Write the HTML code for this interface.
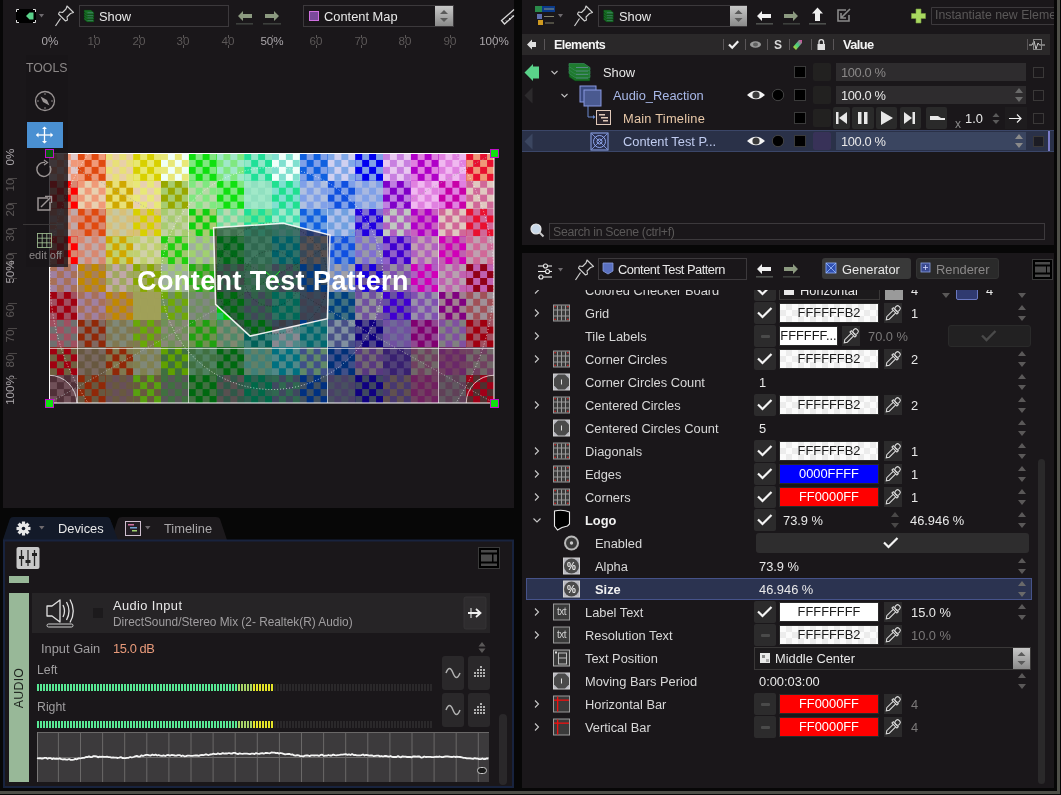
<!DOCTYPE html><html><head><meta charset="utf-8"><style>
html,body{margin:0;padding:0;width:1061px;height:795px;overflow:hidden;background:#070707}
div{position:absolute;box-sizing:border-box}
.t{white-space:nowrap;font-family:"Liberation Sans",sans-serif;will-change:transform}
svg{position:absolute;overflow:visible}
</style></head><body>
<div style="left:0px;top:0px;width:1061px;height:795px;background:#070707"></div>
<div style="left:3px;top:0px;width:511px;height:508px;background:#1a171a"></div>
<div style="left:522px;top:0px;width:532px;height:245px;background:#1a171a"></div>
<div style="left:522px;top:253px;width:532px;height:535px;background:#1a171a"></div>
<div style="left:0px;top:791px;width:1057px;height:3px;background:#4e4f48"></div>
<div style="left:1057px;top:0px;width:3px;height:794px;background:#4e4f48"></div>
<svg style="left:50px;top:153px" width="444" height="250" viewBox="0 0 64 36" preserveAspectRatio="none" shape-rendering="crispEdges"><defs><pattern id="ckp" width="2" height="2" patternUnits="userSpaceOnUse"><rect width="1" height="1" fill="#fff"/><rect x="1" y="1" width="1" height="1" fill="#fff"/></pattern><mask id="ckm" maskUnits="userSpaceOnUse" x="0" y="0" width="64" height="36"><rect width="64" height="36" fill="url(#ckp)"/></mask><clipPath id="logoclip"><polygon points="23.582,10.771 33.614,10.123 40.360,11.822 39.986,23.861 28.843,26.366 23.870,21.787"/></clipPath></defs><rect x="0" y="0" width="4" height="4" fill="#e0c8c8"/><rect x="4" y="0" width="4" height="4" fill="#f09a78"/><rect x="8" y="0" width="4" height="4" fill="#e8d0a8"/><rect x="12" y="0" width="4" height="4" fill="#e8e870"/><rect x="16" y="0" width="4" height="4" fill="#f0fff8"/><rect x="20" y="0" width="4" height="4" fill="#80e880"/><rect x="24" y="0" width="4" height="4" fill="#80e880"/><rect x="28" y="0" width="4" height="4" fill="#90e8c8"/><rect x="32" y="0" width="4" height="4" fill="#f0fffa"/><rect x="36" y="0" width="4" height="4" fill="#80a0e8"/><rect x="40" y="0" width="4" height="4" fill="#d0d0f0"/><rect x="44" y="0" width="4" height="4" fill="#80a0e8"/><rect x="48" y="0" width="4" height="4" fill="#e8c8f0"/><rect x="52" y="0" width="4" height="4" fill="#e080e0"/><rect x="56" y="0" width="4" height="4" fill="#f0b8f0"/><rect x="60" y="0" width="4" height="4" fill="#f09878"/><rect x="0" y="4" width="4" height="4" fill="#d88870"/><rect x="4" y="4" width="4" height="4" fill="#e8d0b0"/><rect x="8" y="4" width="4" height="4" fill="#e8e078"/><rect x="12" y="4" width="4" height="4" fill="#e8d0b0"/><rect x="16" y="4" width="4" height="4" fill="#a8cc70"/><rect x="20" y="4" width="4" height="4" fill="#b8d8a8"/><rect x="24" y="4" width="4" height="4" fill="#80e880"/><rect x="28" y="4" width="4" height="4" fill="#90e0c0"/><rect x="32" y="4" width="4" height="4" fill="#80e0d0"/><rect x="36" y="4" width="4" height="4" fill="#b0c0e0"/><rect x="40" y="4" width="4" height="4" fill="#80a0e8"/><rect x="44" y="4" width="4" height="4" fill="#80a0e8"/><rect x="48" y="4" width="4" height="4" fill="#c080e0"/><rect x="52" y="4" width="4" height="4" fill="#f0b8f0"/><rect x="56" y="4" width="4" height="4" fill="#e080e0"/><rect x="60" y="4" width="4" height="4" fill="#e0c8c0"/><rect x="0" y="8" width="4" height="4" fill="#c0a8a8"/><rect x="4" y="8" width="4" height="4" fill="#d88870"/><rect x="8" y="8" width="4" height="4" fill="#c8c8a0"/><rect x="12" y="8" width="4" height="4" fill="#d8c078"/><rect x="16" y="8" width="4" height="4" fill="#c0d0a0"/><rect x="20" y="8" width="4" height="4" fill="#a8cc70"/><rect x="24" y="8" width="4" height="4" fill="#b8d8b0"/><rect x="28" y="8" width="4" height="4" fill="#70e090"/><rect x="32" y="8" width="4" height="4" fill="#a0e8c8"/><rect x="36" y="8" width="4" height="4" fill="#70a0e0"/><rect x="40" y="8" width="4" height="4" fill="#b0c0e8"/><rect x="44" y="8" width="4" height="4" fill="#8070d0"/><rect x="48" y="8" width="4" height="4" fill="#c0c8c0"/><rect x="52" y="8" width="4" height="4" fill="#c860c0"/><rect x="56" y="8" width="4" height="4" fill="#e0c8c0"/><rect x="60" y="8" width="4" height="4" fill="#d06898"/><rect x="0" y="12" width="4" height="4" fill="#d88870"/><rect x="4" y="12" width="4" height="4" fill="#c0a8a8"/><rect x="8" y="12" width="4" height="4" fill="#c0d070"/><rect x="12" y="12" width="4" height="4" fill="#d0d0a8"/><rect x="16" y="12" width="4" height="4" fill="#a0c870"/><rect x="20" y="12" width="4" height="4" fill="#a0b0a0"/><rect x="24" y="12" width="4" height="4" fill="#2be069"/><rect x="28" y="12" width="4" height="4" fill="#51f3b5"/><rect x="32" y="12" width="4" height="4" fill="#2be0c8"/><rect x="36" y="12" width="4" height="4" fill="#8a948f"/><rect x="40" y="12" width="4" height="4" fill="#6890d8"/><rect x="44" y="12" width="4" height="4" fill="#9898a8"/><rect x="48" y="12" width="4" height="4" fill="#9060c8"/><rect x="52" y="12" width="4" height="4" fill="#c0a0b0"/><rect x="56" y="12" width="4" height="4" fill="#c060b0"/><rect x="60" y="12" width="4" height="4" fill="#c0a0b0"/><rect x="0" y="16" width="4" height="4" fill="#a080a0"/><rect x="4" y="16" width="4" height="4" fill="#a88058"/><rect x="8" y="16" width="4" height="4" fill="#c0a8a8"/><rect x="12" y="16" width="4" height="4" fill="#a0a860"/><rect x="16" y="16" width="4" height="4" fill="#a0c870"/><rect x="20" y="16" width="4" height="4" fill="#70a050"/><rect x="24" y="16" width="4" height="4" fill="#51817c"/><rect x="28" y="16" width="4" height="4" fill="#51cda2"/><rect x="32" y="16" width="4" height="4" fill="#2bba8f"/><rect x="36" y="16" width="4" height="4" fill="#3e81a2"/><rect x="40" y="16" width="4" height="4" fill="#a0a0a8"/><rect x="44" y="16" width="4" height="4" fill="#705898"/><rect x="48" y="16" width="4" height="4" fill="#9890a0"/><rect x="52" y="16" width="4" height="4" fill="#b060c0"/><rect x="56" y="16" width="4" height="4" fill="#b8a0b0"/><rect x="60" y="16" width="4" height="4" fill="#c060b0"/><rect x="0" y="20" width="4" height="4" fill="#a05060"/><rect x="4" y="20" width="4" height="4" fill="#a080a0"/><rect x="8" y="20" width="4" height="4" fill="#a88058"/><rect x="12" y="20" width="4" height="4" fill="#a0a058"/><rect x="16" y="20" width="4" height="4" fill="#709060"/><rect x="20" y="20" width="4" height="4" fill="#808880"/><rect x="24" y="20" width="4" height="4" fill="#2bba69"/><rect x="28" y="20" width="4" height="4" fill="#2bba7c"/><rect x="32" y="20" width="4" height="4" fill="#2be0b5"/><rect x="36" y="20" width="4" height="4" fill="#516e8f"/><rect x="40" y="20" width="4" height="4" fill="#407080"/><rect x="44" y="20" width="4" height="4" fill="#909098"/><rect x="48" y="20" width="4" height="4" fill="#6850a0"/><rect x="52" y="20" width="4" height="4" fill="#9890a8"/><rect x="56" y="20" width="4" height="4" fill="#a08090"/><rect x="60" y="20" width="4" height="4" fill="#a09098"/><rect x="0" y="24" width="4" height="4" fill="#707070"/><rect x="4" y="24" width="4" height="4" fill="#806860"/><rect x="8" y="24" width="4" height="4" fill="#808878"/><rect x="12" y="24" width="4" height="4" fill="#807850"/><rect x="16" y="24" width="4" height="4" fill="#888878"/><rect x="20" y="24" width="4" height="4" fill="#709050"/><rect x="24" y="24" width="4" height="4" fill="#808870"/><rect x="28" y="24" width="4" height="4" fill="#408078"/><rect x="32" y="24" width="4" height="4" fill="#888890"/><rect x="36" y="24" width="4" height="4" fill="#408080"/><rect x="40" y="24" width="4" height="4" fill="#8090a0"/><rect x="44" y="24" width="4" height="4" fill="#504888"/><rect x="48" y="24" width="4" height="4" fill="#706898"/><rect x="52" y="24" width="4" height="4" fill="#904890"/><rect x="56" y="24" width="4" height="4" fill="#808080"/><rect x="60" y="24" width="4" height="4" fill="#a05060"/><rect x="0" y="28" width="4" height="4" fill="#706040"/><rect x="4" y="28" width="4" height="4" fill="#786860"/><rect x="8" y="28" width="4" height="4" fill="#807850"/><rect x="12" y="28" width="4" height="4" fill="#808878"/><rect x="16" y="28" width="4" height="4" fill="#407040"/><rect x="20" y="28" width="4" height="4" fill="#508060"/><rect x="24" y="28" width="4" height="4" fill="#407048"/><rect x="28" y="28" width="4" height="4" fill="#608068"/><rect x="32" y="28" width="4" height="4" fill="#508888"/><rect x="36" y="28" width="4" height="4" fill="#608868"/><rect x="40" y="28" width="4" height="4" fill="#405088"/><rect x="44" y="28" width="4" height="4" fill="#706870"/><rect x="48" y="28" width="4" height="4" fill="#504078"/><rect x="52" y="28" width="4" height="4" fill="#706868"/><rect x="56" y="28" width="4" height="4" fill="#704060"/><rect x="60" y="28" width="4" height="4" fill="#706868"/><rect x="0" y="32" width="4" height="4" fill="#705058"/><rect x="4" y="32" width="4" height="4" fill="#685840"/><rect x="8" y="32" width="4" height="4" fill="#685058"/><rect x="12" y="32" width="4" height="4" fill="#685840"/><rect x="16" y="32" width="4" height="4" fill="#585858"/><rect x="20" y="32" width="4" height="4" fill="#407040"/><rect x="24" y="32" width="4" height="4" fill="#585050"/><rect x="28" y="32" width="4" height="4" fill="#306050"/><rect x="32" y="32" width="4" height="4" fill="#404860"/><rect x="36" y="32" width="4" height="4" fill="#405060"/><rect x="40" y="32" width="4" height="4" fill="#485060"/><rect x="44" y="32" width="4" height="4" fill="#404860"/><rect x="48" y="32" width="4" height="4" fill="#605050"/><rect x="52" y="32" width="4" height="4" fill="#704060"/><rect x="56" y="32" width="4" height="4" fill="#605860"/><rect x="60" y="32" width="4" height="4" fill="#503030"/><g mask="url(#ckm)"><rect x="0" y="0" width="4" height="4" fill="#f09878"/><rect x="4" y="0" width="4" height="4" fill="#e04a10"/><rect x="8" y="0" width="4" height="4" fill="#e8e078"/><rect x="12" y="0" width="4" height="4" fill="#d8d000"/><rect x="16" y="0" width="4" height="4" fill="#e8e878"/><rect x="20" y="0" width="4" height="4" fill="#10e010"/><rect x="24" y="0" width="4" height="4" fill="#a0e8c8"/><rect x="28" y="0" width="4" height="4" fill="#20e098"/><rect x="32" y="0" width="4" height="4" fill="#80e0d0"/><rect x="36" y="0" width="4" height="4" fill="#1060e0"/><rect x="40" y="0" width="4" height="4" fill="#80a8e8"/><rect x="44" y="0" width="4" height="4" fill="#0000f0"/><rect x="48" y="0" width="4" height="4" fill="#c880e0"/><rect x="52" y="0" width="4" height="4" fill="#b000c8"/><rect x="56" y="0" width="4" height="4" fill="#e080e0"/><rect x="60" y="0" width="4" height="4" fill="#e81030"/><rect x="0" y="4" width="4" height="4" fill="#ff0000"/><rect x="4" y="4" width="4" height="4" fill="#f09a78"/><rect x="8" y="4" width="4" height="4" fill="#d0a800"/><rect x="12" y="4" width="4" height="4" fill="#e8e878"/><rect x="16" y="4" width="4" height="4" fill="#98a800"/><rect x="20" y="4" width="4" height="4" fill="#80e880"/><rect x="24" y="4" width="4" height="4" fill="#10e010"/><rect x="28" y="4" width="4" height="4" fill="#a0e8c8"/><rect x="32" y="4" width="4" height="4" fill="#20e090"/><rect x="36" y="4" width="4" height="4" fill="#80a0e8"/><rect x="40" y="4" width="4" height="4" fill="#1050e0"/><rect x="44" y="4" width="4" height="4" fill="#a8b8e0"/><rect x="48" y="4" width="4" height="4" fill="#8000c8"/><rect x="52" y="4" width="4" height="4" fill="#e080e0"/><rect x="56" y="4" width="4" height="4" fill="#c800a8"/><rect x="60" y="4" width="4" height="4" fill="#d06898"/><rect x="0" y="8" width="4" height="4" fill="#d88870"/><rect x="4" y="8" width="4" height="4" fill="#e04a10"/><rect x="8" y="8" width="4" height="4" fill="#d8c078"/><rect x="12" y="8" width="4" height="4" fill="#d8d000"/><rect x="16" y="8" width="4" height="4" fill="#a8cc70"/><rect x="20" y="8" width="4" height="4" fill="#10d010"/><rect x="24" y="8" width="4" height="4" fill="#70e0a0"/><rect x="28" y="8" width="4" height="4" fill="#20e098"/><rect x="32" y="8" width="4" height="4" fill="#40e0b0"/><rect x="36" y="8" width="4" height="4" fill="#1060e0"/><rect x="40" y="8" width="4" height="4" fill="#70a0e0"/><rect x="44" y="8" width="4" height="4" fill="#2000e0"/><rect x="48" y="8" width="4" height="4" fill="#b060c0"/><rect x="52" y="8" width="4" height="4" fill="#b000c8"/><rect x="56" y="8" width="4" height="4" fill="#d06898"/><rect x="60" y="8" width="4" height="4" fill="#e81030"/><rect x="0" y="12" width="4" height="4" fill="#ff0000"/><rect x="4" y="12" width="4" height="4" fill="#d88870"/><rect x="8" y="12" width="4" height="4" fill="#d0a800"/><rect x="12" y="12" width="4" height="4" fill="#c0d070"/><rect x="16" y="12" width="4" height="4" fill="#20d010"/><rect x="20" y="12" width="4" height="4" fill="#a0d070"/><rect x="24" y="12" width="4" height="4" fill="#00cd0a"/><rect x="28" y="12" width="4" height="4" fill="#2bcd8f"/><rect x="32" y="12" width="4" height="4" fill="#00bac8"/><rect x="36" y="12" width="4" height="4" fill="#3e81a2"/><rect x="40" y="12" width="4" height="4" fill="#1050e0"/><rect x="44" y="12" width="4" height="4" fill="#8070d0"/><rect x="48" y="12" width="4" height="4" fill="#4000d0"/><rect x="52" y="12" width="4" height="4" fill="#b060c0"/><rect x="56" y="12" width="4" height="4" fill="#d000b8"/><rect x="60" y="12" width="4" height="4" fill="#d06898"/><rect x="0" y="16" width="4" height="4" fill="#a87058"/><rect x="4" y="16" width="4" height="4" fill="#c08800"/><rect x="8" y="16" width="4" height="4" fill="#a0a860"/><rect x="12" y="16" width="4" height="4" fill="#88a800"/><rect x="16" y="16" width="4" height="4" fill="#a0b0a0"/><rect x="20" y="16" width="4" height="4" fill="#20b010"/><rect x="24" y="16" width="4" height="4" fill="#2bba7c"/><rect x="28" y="16" width="4" height="4" fill="#2bcd7c"/><rect x="32" y="16" width="4" height="4" fill="#5181a2"/><rect x="36" y="16" width="4" height="4" fill="#005aff"/><rect x="40" y="16" width="4" height="4" fill="#6888d0"/><rect x="44" y="16" width="4" height="4" fill="#1800e0"/><rect x="48" y="16" width="4" height="4" fill="#8050b0"/><rect x="52" y="16" width="4" height="4" fill="#d000b8"/><rect x="56" y="16" width="4" height="4" fill="#c060b0"/><rect x="60" y="16" width="4" height="4" fill="#900018"/><rect x="0" y="20" width="4" height="4" fill="#a00010"/><rect x="4" y="20" width="4" height="4" fill="#a87058"/><rect x="8" y="20" width="4" height="4" fill="#c08800"/><rect x="12" y="20" width="4" height="4" fill="#a0a058"/><rect x="16" y="20" width="4" height="4" fill="#70a808"/><rect x="20" y="20" width="4" height="4" fill="#709060"/><rect x="24" y="20" width="4" height="4" fill="#00cd00"/><rect x="28" y="20" width="4" height="4" fill="#5181a2"/><rect x="32" y="20" width="4" height="4" fill="#00cda2"/><rect x="36" y="20" width="4" height="4" fill="#3e81a2"/><rect x="40" y="20" width="4" height="4" fill="#004080"/><rect x="44" y="20" width="4" height="4" fill="#7050a0"/><rect x="48" y="20" width="4" height="4" fill="#4000d0"/><rect x="52" y="20" width="4" height="4" fill="#8050b0"/><rect x="56" y="20" width="4" height="4" fill="#800080"/><rect x="60" y="20" width="4" height="4" fill="#a05058"/><rect x="0" y="24" width="4" height="4" fill="#a05060"/><rect x="4" y="24" width="4" height="4" fill="#902808"/><rect x="8" y="24" width="4" height="4" fill="#807850"/><rect x="12" y="24" width="4" height="4" fill="#68a808"/><rect x="16" y="24" width="4" height="4" fill="#709058"/><rect x="20" y="24" width="4" height="4" fill="#20a010"/><rect x="24" y="24" width="4" height="4" fill="#508868"/><rect x="28" y="24" width="4" height="4" fill="#006058"/><rect x="32" y="24" width="4" height="4" fill="#508888"/><rect x="36" y="24" width="4" height="4" fill="#006870"/><rect x="40" y="24" width="4" height="4" fill="#485088"/><rect x="44" y="24" width="4" height="4" fill="#100080"/><rect x="48" y="24" width="4" height="4" fill="#7050a0"/><rect x="52" y="24" width="4" height="4" fill="#800070"/><rect x="56" y="24" width="4" height="4" fill="#8050a0"/><rect x="60" y="24" width="4" height="4" fill="#a00010"/><rect x="0" y="28" width="4" height="4" fill="#a00010"/><rect x="4" y="28" width="4" height="4" fill="#685840"/><rect x="8" y="28" width="4" height="4" fill="#902808"/><rect x="12" y="28" width="4" height="4" fill="#808050"/><rect x="16" y="28" width="4" height="4" fill="#60a000"/><rect x="20" y="28" width="4" height="4" fill="#407040"/><rect x="24" y="28" width="4" height="4" fill="#006810"/><rect x="28" y="28" width="4" height="4" fill="#408078"/><rect x="32" y="28" width="4" height="4" fill="#007080"/><rect x="36" y="28" width="4" height="4" fill="#405088"/><rect x="40" y="28" width="4" height="4" fill="#003078"/><rect x="44" y="28" width="4" height="4" fill="#583880"/><rect x="48" y="28" width="4" height="4" fill="#382070"/><rect x="52" y="28" width="4" height="4" fill="#704060"/><rect x="56" y="28" width="4" height="4" fill="#6a2868"/><rect x="60" y="28" width="4" height="4" fill="#704060"/><rect x="0" y="32" width="4" height="4" fill="#503038"/><rect x="4" y="32" width="4" height="4" fill="#902808"/><rect x="8" y="32" width="4" height="4" fill="#685840"/><rect x="12" y="32" width="4" height="4" fill="#58a010"/><rect x="16" y="32" width="4" height="4" fill="#407040"/><rect x="20" y="32" width="4" height="4" fill="#006810"/><rect x="24" y="32" width="4" height="4" fill="#305848"/><rect x="28" y="32" width="4" height="4" fill="#006848"/><rect x="32" y="32" width="4" height="4" fill="#306850"/><rect x="36" y="32" width="4" height="4" fill="#003080"/><rect x="40" y="32" width="4" height="4" fill="#4a4068"/><rect x="44" y="32" width="4" height="4" fill="#100080"/><rect x="48" y="32" width="4" height="4" fill="#483870"/><rect x="52" y="32" width="4" height="4" fill="#702060"/><rect x="56" y="32" width="4" height="4" fill="#604058"/><rect x="60" y="32" width="4" height="4" fill="#a00018"/></g><g clip-path="url(#logoclip)"><rect x="20" y="8" width="4" height="4" fill="#656843"/><rect x="24" y="8" width="4" height="4" fill="#407050"/><rect x="28" y="8" width="4" height="4" fill="#307860"/><rect x="32" y="8" width="4" height="4" fill="#307060"/><rect x="36" y="8" width="4" height="4" fill="#404870"/><rect x="40" y="8" width="4" height="4" fill="#686375"/><rect x="20" y="12" width="4" height="4" fill="#615c57"/><rect x="24" y="12" width="4" height="4" fill="#307040"/><rect x="28" y="12" width="4" height="4" fill="#407860"/><rect x="32" y="12" width="4" height="4" fill="#307068"/><rect x="36" y="12" width="4" height="4" fill="#585050"/><rect x="40" y="12" width="4" height="4" fill="#4a4e6f"/><rect x="20" y="16" width="4" height="4" fill="#4d5536"/><rect x="24" y="16" width="4" height="4" fill="#404848"/><rect x="28" y="16" width="4" height="4" fill="#406858"/><rect x="32" y="16" width="4" height="4" fill="#306050"/><rect x="36" y="16" width="4" height="4" fill="#384858"/><rect x="40" y="16" width="4" height="4" fill="#61555b"/><rect x="20" y="20" width="4" height="4" fill="#544b4a"/><rect x="24" y="20" width="4" height="4" fill="#306040"/><rect x="28" y="20" width="4" height="4" fill="#306048"/><rect x="32" y="20" width="4" height="4" fill="#307060"/><rect x="36" y="20" width="4" height="4" fill="#404050"/><rect x="40" y="20" width="4" height="4" fill="#39414a"/><rect x="20" y="24" width="4" height="4" fill="#4d4e36"/><rect x="24" y="24" width="4" height="4" fill="#305840"/><rect x="28" y="24" width="4" height="4" fill="#306048"/><rect x="32" y="24" width="4" height="4" fill="#3c3c44"/><rect x="36" y="24" width="4" height="4" fill="#384858"/><rect x="40" y="24" width="4" height="4" fill="#544e57"/><g mask="url(#ckm)"><rect x="20" y="8" width="4" height="4" fill="#25691b"/><rect x="24" y="8" width="4" height="4" fill="#508060"/><rect x="28" y="8" width="4" height="4" fill="#306850"/><rect x="32" y="8" width="4" height="4" fill="#407068"/><rect x="36" y="8" width="4" height="4" fill="#203870"/><rect x="40" y="8" width="4" height="4" fill="#4d5572"/><rect x="20" y="12" width="4" height="4" fill="#616943"/><rect x="24" y="12" width="4" height="4" fill="#006818"/><rect x="28" y="12" width="4" height="4" fill="#306850"/><rect x="32" y="12" width="4" height="4" fill="#006068"/><rect x="36" y="12" width="4" height="4" fill="#384858"/><rect x="40" y="12" width="4" height="4" fill="#253472"/><rect x="20" y="16" width="4" height="4" fill="#2b5c1b"/><rect x="24" y="16" width="4" height="4" fill="#306048"/><rect x="28" y="16" width="4" height="4" fill="#306848"/><rect x="32" y="16" width="4" height="4" fill="#404858"/><rect x="36" y="16" width="4" height="4" fill="#003880"/><rect x="40" y="16" width="4" height="4" fill="#4a4b6b"/><rect x="20" y="20" width="4" height="4" fill="#4d4e3c"/><rect x="24" y="20" width="4" height="4" fill="#006810"/><rect x="28" y="20" width="4" height="4" fill="#404858"/><rect x="32" y="20" width="4" height="4" fill="#006858"/><rect x="36" y="20" width="4" height="4" fill="#384858"/><rect x="40" y="20" width="4" height="4" fill="#1e2d4a"/><rect x="20" y="24" width="4" height="4" fill="#2b551b"/><rect x="24" y="24" width="4" height="4" fill="#3a3a3a"/><rect x="28" y="24" width="4" height="4" fill="#006810"/><rect x="32" y="24" width="4" height="4" fill="#384858"/><rect x="36" y="24" width="4" height="4" fill="#003888"/><rect x="40" y="24" width="4" height="4" fill="#3c344d"/></g></g></svg>
<svg style="left:0;top:0" width="1061" height="795"><line x1="77.5" y1="265" x2="77.5" y2="403" stroke="#fff" stroke-opacity="0.62" stroke-width="1"/><line x1="188.5" y1="181" x2="188.5" y2="403" stroke="#fff" stroke-opacity="0.62" stroke-width="1"/><line x1="327.5" y1="209" x2="327.5" y2="403" stroke="#fff" stroke-opacity="0.62" stroke-width="1"/><line x1="438.5" y1="209" x2="438.5" y2="403" stroke="#fff" stroke-opacity="0.62" stroke-width="1"/><line x1="50" y1="348.5" x2="494" y2="348.5" stroke="#fff" stroke-opacity="0.62" stroke-width="1"/><clipPath id="patclip"><rect x="50" y="154" width="444" height="249"/></clipPath><g clip-path="url(#patclip)"><mask id="nologo" maskUnits="userSpaceOnUse" x="0" y="0" width="1061" height="795"><rect width="1061" height="795" fill="#fff"/><polygon points="213.6,227.8 283.2,223.3 330,235.1 327.4,318.7 250.1,336.1 215.6,304.3" fill="#000"/></mask><g mask="url(#nologo)"><line x1="49" y1="153" x2="494" y2="403" stroke="#fff" stroke-opacity="0.75" stroke-dasharray="1 2"/><line x1="494" y1="153" x2="49" y2="403" stroke="#fff" stroke-opacity="0.75" stroke-dasharray="1 2"/></g><line x1="49" y1="153" x2="494" y2="403" stroke="#000" stroke-opacity="0.3" stroke-dasharray="1 2"/><line x1="494" y1="153" x2="49" y2="403" stroke="#000" stroke-opacity="0.3" stroke-dasharray="1 2"/><circle cx="272" cy="278.5" r="27.75" fill="none" stroke="#000" stroke-opacity="0.35" stroke-dasharray="1 2"/><circle cx="272" cy="278.5" r="55.5" fill="none" stroke="#000" stroke-opacity="0.35" stroke-dasharray="1 2"/><circle cx="272" cy="278.5" r="111" fill="none" stroke="#fff" stroke-opacity="0.7" stroke-dasharray="1 2"/><circle cx="272" cy="278.5" r="222" fill="none" stroke="#fff" stroke-opacity="0.7" stroke-dasharray="1 2"/><circle cx="49" cy="403" r="27.75" fill="none" stroke="#fff" stroke-opacity="0.7"/><circle cx="494" cy="403" r="27.75" fill="none" stroke="#fff" stroke-opacity="0.7"/></g><polygon points="213.6,227.8 283.2,223.3 330,235.1 327.4,318.7 250.1,336.1 215.6,304.3" fill="none" stroke="#fff" stroke-opacity="0.9" stroke-width="1.5"/><rect x="49.5" y="153.5" width="444.5" height="249.5" fill="none" stroke="#fff" stroke-width="1"/><line x1="266" y1="272" x2="280" y2="285" stroke="#20e020" stroke-width="1"/><line x1="280" y1="271" x2="266" y2="285" stroke="#20e020" stroke-width="1"/></svg>
<div class="t" style="left:137px;top:266px;font-size:27px;line-height:30px;color:#fff;font-weight:700;letter-spacing:0.42px">Content Test Pattern</div>
<div style="left:26px;top:55px;width:42px;height:212px;background:rgba(24,21,24,0.82)"></div>
<div class="t" style="left:26px;top:60px;font-size:12.3px;line-height:16px;color:#8c8888;font-weight:400;">TOOLS</div>
<div style="left:27px;top:122px;width:36px;height:26px;background:#4a90d2"></div>
<div style="left:23px;top:224px;width:40px;height:1px;background:#3a3738"></div>
<div class="t" style="left:29px;top:247px;font-size:11px;line-height:16px;color:#8c8888;font-weight:400;">edit off</div>
<svg style="left:0;top:0" width="100" height="300">
<circle cx="45" cy="101" r="9.5" fill="none" stroke="#9a9494" stroke-width="1.3"/>
<path d="M40.5 96.5 L47 100 L49.5 105.5 L43 102 Z" fill="#9a9494"/>
<g fill="#9a9494"><circle cx="45" cy="94" r="0.8"/><circle cx="45" cy="108" r="0.8"/><circle cx="38" cy="101" r="0.8"/><circle cx="52" cy="101" r="0.8"/></g>
<g stroke="#fff" stroke-width="1.3" fill="#fff">
<line x1="36.5" y1="135" x2="52.5" y2="135"/><line x1="44.5" y1="127" x2="44.5" y2="143"/>
<path d="M36 135 l2.5-2.5 v5 z M53 135 l-2.5-2.5 v5 z M44.5 126.5 l-2.5 2.5 h5 z M44.5 143.5 l-2.5-2.5 h5 z" stroke="none"/></g>
<path d="M50 166 A7 7 0 1 1 45 162.5" fill="none" stroke="#9a9494" stroke-width="1.4"/>
<path d="M44 160 l3.5 2.5 -3.5 2.5" fill="none" stroke="#9a9494" stroke-width="1.3"/>
<path d="M48 198 h-10 v12 h12 v-8" fill="none" stroke="#9a9494" stroke-width="1.5"/>
<line x1="41" y1="207" x2="50.5" y2="197.5" stroke="#9a9494" stroke-width="1.4"/>
<path d="M45 196.5 h6.5 v6.5" fill="none" stroke="#9a9494" stroke-width="1.4"/>
<g stroke="#a8c89a" stroke-width="0.8" fill="none"><rect x="37.5" y="233.5" width="14" height="14"/><line x1="42.2" y1="233.5" x2="42.2" y2="247.5"/><line x1="46.8" y1="233.5" x2="46.8" y2="247.5"/><line x1="37.5" y1="238.2" x2="51.5" y2="238.2"/><line x1="37.5" y1="242.8" x2="51.5" y2="242.8"/></g>
</svg>
<svg style="left:0;top:0" width="520" height="60">
<rect x="16" y="9" width="20" height="14" fill="#000"/>
<path d="M16.5 12 v-2.5 h2.5 M33 9.5 h2.5 v2.5 M35.5 20 v2.5 h-2.5 M19 22.5 h-2.5 v-2.5" stroke="#ddd" stroke-width="1" fill="none"/>
<path d="M26 16 l3.5-3.5 h4 v7 h-4 z" fill="#5ad28a"/>
<path d="M39 14 h5 l-2.5 3.5 z" fill="#6e6a6e"/>
<path d="M69 8 l4.5 4.5 -3 1 -3.5 3.5 0.5 3 -2 1 -7-7 1-2 3 0.5 3.5-3.5 1-3z" fill="none" stroke="#d0d0d0" stroke-width="1.1" stroke-linejoin="round"/>
<line x1="60.5" y1="18.5" x2="55.5" y2="26" stroke="#d0d0d0" stroke-width="1.2"/>
<rect x="79.5" y="5.5" width="149" height="21" fill="none" stroke="#3c393c"/>
<g><path d="M84 19.5 l3 2.5 h7 v-2 l-3-2.5 h-7z" fill="#177024" stroke="#0c3012" stroke-width="0.5"/><line x1="87.5" y1="20.2" x2="93" y2="20.2" stroke="#5a8a90" stroke-width="0.6"/><path d="M84 17.0 l3 2.5 h7 v-2 l-3-2.5 h-7z" fill="#177024" stroke="#0c3012" stroke-width="0.5"/><line x1="87.5" y1="17.7" x2="93" y2="17.7" stroke="#5a8a90" stroke-width="0.6"/><path d="M84 14.5 l3 2.5 h7 v-2 l-3-2.5 h-7z" fill="#177024" stroke="#0c3012" stroke-width="0.5"/><line x1="87.5" y1="15.2" x2="93" y2="15.2" stroke="#5a8a90" stroke-width="0.6"/><path d="M84 12.0 l3 2.5 h7 v-2 l-3-2.5 h-7z" fill="#177024" stroke="#0c3012" stroke-width="0.5"/><line x1="87.5" y1="12.7" x2="93" y2="12.7" stroke="#5a8a90" stroke-width="0.6"/></g>
<path d="M238 16 l5-5 v3 h9 v4 h-9 v3 z" fill="#8c9a80"/><rect x="236" y="23" width="17" height="1.6" fill="#3c3f3c"/>
<path d="M279 16 l-5-5 v3 h-9 v4 h9 v3 z" fill="#8c9a80"/><rect x="263" y="23" width="18" height="1.6" fill="#3c3f3c"/>
<rect x="303.5" y="5.5" width="150" height="21" fill="none" stroke="#3c393c"/>
<rect x="309.5" y="11.5" width="9" height="9" fill="#7a4a9a" stroke="#d070e0" stroke-width="1"/>
<path d="M514 9.5 L501.5 20.5 L504.5 24 L514 15.5" fill="none" stroke="#d8d8d8" stroke-width="1.3"/>
<path d="M506 20.5 l1.5 1.5 M509 18 l1.5 1.5 M512 15.5 l1.5 1.5" stroke="#d8d8d8" stroke-width="1"/>
</svg>
<div style="left:435px;top:6px;width:18px;height:20px;background:linear-gradient(#c8c8c8,#8a8a8a)"></div>
<svg style="left:435px;top:6px" width="18" height="20"><path d="M9 4 l4 4 h-8z M9 16 l4-4 h-8z" fill="#5a5a5a"/></svg>
<div class="t" style="left:99px;top:9px;font-size:12.85px;line-height:16px;color:#e8e8e8;font-weight:400;">Show</div>
<div class="t" style="left:324px;top:9px;font-size:12.85px;line-height:16px;color:#e8e8e8;font-weight:400;">Content Map</div>
<div class="t" style="left:10.0px;top:33px;width:80px;text-align:center;font-size:11.6px;line-height:16px;color:#aaa6aa">0%</div>
<div style="left:50px;top:35px;width:1px;height:2px;background:#5c5858"></div>
<div style="left:50px;top:45px;width:1px;height:3px;background:#5c5858"></div>
<div class="t" style="left:54.4px;top:33px;width:80px;text-align:center;font-size:11.6px;line-height:16px;color:#5c5858">10</div>
<div style="left:94px;top:35px;width:1px;height:3px;background:#5c5858"></div>
<div style="left:94px;top:45px;width:1px;height:3px;background:#5c5858"></div>
<div class="t" style="left:98.8px;top:33px;width:80px;text-align:center;font-size:11.6px;line-height:16px;color:#5c5858">20</div>
<div style="left:139px;top:35px;width:1px;height:3px;background:#5c5858"></div>
<div style="left:139px;top:45px;width:1px;height:3px;background:#5c5858"></div>
<div class="t" style="left:143.2px;top:33px;width:80px;text-align:center;font-size:11.6px;line-height:16px;color:#5c5858">30</div>
<div style="left:183px;top:35px;width:1px;height:3px;background:#5c5858"></div>
<div style="left:183px;top:45px;width:1px;height:3px;background:#5c5858"></div>
<div class="t" style="left:187.6px;top:33px;width:80px;text-align:center;font-size:11.6px;line-height:16px;color:#5c5858">40</div>
<div style="left:228px;top:35px;width:1px;height:3px;background:#5c5858"></div>
<div style="left:228px;top:45px;width:1px;height:3px;background:#5c5858"></div>
<div class="t" style="left:232.0px;top:33px;width:80px;text-align:center;font-size:11.6px;line-height:16px;color:#aaa6aa">50%</div>
<div style="left:272px;top:35px;width:1px;height:2px;background:#5c5858"></div>
<div style="left:272px;top:45px;width:1px;height:3px;background:#5c5858"></div>
<div class="t" style="left:276.4px;top:33px;width:80px;text-align:center;font-size:11.6px;line-height:16px;color:#5c5858">60</div>
<div style="left:316px;top:35px;width:1px;height:3px;background:#5c5858"></div>
<div style="left:316px;top:45px;width:1px;height:3px;background:#5c5858"></div>
<div class="t" style="left:320.8px;top:33px;width:80px;text-align:center;font-size:11.6px;line-height:16px;color:#5c5858">70</div>
<div style="left:361px;top:35px;width:1px;height:3px;background:#5c5858"></div>
<div style="left:361px;top:45px;width:1px;height:3px;background:#5c5858"></div>
<div class="t" style="left:365.2px;top:33px;width:80px;text-align:center;font-size:11.6px;line-height:16px;color:#5c5858">80</div>
<div style="left:405px;top:35px;width:1px;height:3px;background:#5c5858"></div>
<div style="left:405px;top:45px;width:1px;height:3px;background:#5c5858"></div>
<div class="t" style="left:409.6px;top:33px;width:80px;text-align:center;font-size:11.6px;line-height:16px;color:#5c5858">90</div>
<div style="left:450px;top:35px;width:1px;height:3px;background:#5c5858"></div>
<div style="left:450px;top:45px;width:1px;height:3px;background:#5c5858"></div>
<div class="t" style="left:454.0px;top:33px;width:80px;text-align:center;font-size:11.6px;line-height:16px;color:#aaa6aa">100%</div>
<div style="left:494px;top:35px;width:1px;height:2px;background:#5c5858"></div>
<div style="left:494px;top:45px;width:1px;height:3px;background:#5c5858"></div>
<div class="t" style="left:-30px;top:149px;width:80px;height:16px;text-align:center;font-size:11.6px;line-height:16px;color:#aaa6aa;transform:rotate(-90deg)">0%</div>
<div class="t" style="left:-30px;top:177px;width:80px;height:16px;text-align:center;font-size:11.6px;line-height:16px;color:#5c5858;transform:rotate(-90deg)">10</div>
<div class="t" style="left:-30px;top:202px;width:80px;height:16px;text-align:center;font-size:11.6px;line-height:16px;color:#5c5858;transform:rotate(-90deg)">20</div>
<div class="t" style="left:-30px;top:227px;width:80px;height:16px;text-align:center;font-size:11.6px;line-height:16px;color:#5c5858;transform:rotate(-90deg)">30</div>
<div class="t" style="left:-30px;top:252px;width:80px;height:16px;text-align:center;font-size:11.6px;line-height:16px;color:#5c5858;transform:rotate(-90deg)">40</div>
<div class="t" style="left:-30px;top:264px;width:80px;height:16px;text-align:center;font-size:11.6px;line-height:16px;color:#aaa6aa;transform:rotate(-90deg)">50%</div>
<div class="t" style="left:-30px;top:303px;width:80px;height:16px;text-align:center;font-size:11.6px;line-height:16px;color:#5c5858;transform:rotate(-90deg)">60</div>
<div class="t" style="left:-30px;top:328px;width:80px;height:16px;text-align:center;font-size:11.6px;line-height:16px;color:#5c5858;transform:rotate(-90deg)">70</div>
<div class="t" style="left:-30px;top:353px;width:80px;height:16px;text-align:center;font-size:11.6px;line-height:16px;color:#5c5858;transform:rotate(-90deg)">80</div>
<div class="t" style="left:-30px;top:382px;width:80px;height:16px;text-align:center;font-size:11.6px;line-height:16px;color:#aaa6aa;transform:rotate(-90deg)">100%</div>
<div style="left:8px;top:178px;width:9px;height:1px;background:#4a4646"></div>
<div style="left:8px;top:203px;width:9px;height:1px;background:#4a4646"></div>
<div style="left:8px;top:228px;width:9px;height:1px;background:#4a4646"></div>
<div style="left:8px;top:253px;width:9px;height:1px;background:#4a4646"></div>
<div style="left:8px;top:278px;width:9px;height:1px;background:#4a4646"></div>
<div style="left:8px;top:303px;width:9px;height:1px;background:#4a4646"></div>
<div style="left:8px;top:328px;width:9px;height:1px;background:#4a4646"></div>
<div style="left:8px;top:353px;width:9px;height:1px;background:#4a4646"></div>
<div style="left:8px;top:378px;width:9px;height:1px;background:#4a4646"></div>
<div style="left:45px;top:149px;width:9px;height:9px;background:#0a5a10;border:1px solid #c010c8"></div>
<div style="left:490px;top:149px;width:9px;height:9px;background:#10e010;border:1px solid #c010c8"></div>
<div style="left:45px;top:399px;width:9px;height:9px;background:#10e010;border:1px solid #c010c8"></div>
<div style="left:490px;top:399px;width:9px;height:9px;background:#10e010;border:1px solid #c010c8"></div>
<svg style="left:0;top:0" width="1061" height="300">
<rect x="535" y="6" width="7" height="6" fill="#2a8a4a"/><rect x="542" y="6" width="13" height="6" fill="#0a3a8a"/><line x1="544" y1="9" x2="554" y2="9" stroke="#b0b080" stroke-width="0.8"/>
<rect x="537" y="14" width="5" height="5" fill="#6070b0"/><line x1="544" y1="16.5" x2="554" y2="16.5" stroke="#a0a080" stroke-width="0.8"/>
<rect x="538" y="20" width="5" height="5" fill="#d09a20"/><line x1="545" y1="23" x2="554" y2="23" stroke="#a0a080" stroke-width="0.8"/>
<path d="M558 14 h5 l-2.5 3.5 z" fill="#6e6a6e"/>
<path d="M588 8 l4.5 4.5 -3 1 -3.5 3.5 0.5 3 -2 1 -7-7 1-2 3 0.5 3.5-3.5 1-3z" fill="none" stroke="#d0d0d0" stroke-width="1.1" stroke-linejoin="round"/>
<line x1="579.5" y1="18.5" x2="574.5" y2="26" stroke="#d0d0d0" stroke-width="1.2"/>
<rect x="598.5" y="5.5" width="148" height="21" fill="none" stroke="#3c393c"/>
<g><path d="M603.5 19.5 l3 2.5 h7 v-2 l-3-2.5 h-7z" fill="#177024" stroke="#0c3012" stroke-width="0.5"/><line x1="607.0" y1="20.2" x2="612.5" y2="20.2" stroke="#5a8a90" stroke-width="0.6"/><path d="M603.5 17.0 l3 2.5 h7 v-2 l-3-2.5 h-7z" fill="#177024" stroke="#0c3012" stroke-width="0.5"/><line x1="607.0" y1="17.7" x2="612.5" y2="17.7" stroke="#5a8a90" stroke-width="0.6"/><path d="M603.5 14.5 l3 2.5 h7 v-2 l-3-2.5 h-7z" fill="#177024" stroke="#0c3012" stroke-width="0.5"/><line x1="607.0" y1="15.2" x2="612.5" y2="15.2" stroke="#5a8a90" stroke-width="0.6"/><path d="M603.5 12.0 l3 2.5 h7 v-2 l-3-2.5 h-7z" fill="#177024" stroke="#0c3012" stroke-width="0.5"/><line x1="607.0" y1="12.7" x2="612.5" y2="12.7" stroke="#5a8a90" stroke-width="0.6"/></g>
<path d="M757 16 l5-5 v3 h9 v4 h-9 v3 z" fill="#f0f0f0"/><rect x="756" y="23" width="17" height="1.6" fill="#4c4f4c"/>
<path d="M798 16 l-5-5 v3 h-9 v4 h9 v3 z" fill="#8c9a80"/><rect x="783" y="23" width="17" height="1.6" fill="#3c3f3c"/>
<path d="M817.5 7.5 l5.5 6 h-3 v7.5 h-5 v-7.5 h-3 z" fill="#f0f0f0"/><rect x="809" y="23" width="17" height="1.6" fill="#4c4f4c"/>
<path d="M846 10 h-8 v11 h11 v-6" fill="none" stroke="#8a8a8a" stroke-width="1.6"/><path d="M841 18 l9-9 M841 13 v5 h5" fill="none" stroke="#8a8a8a" stroke-width="1.6"/>
<path d="M916 9 h5 v4.5 h4.5 v5 h-4.5 v4.5 h-5 v-4.5 h-4.5 v-5 h4.5z" fill="#a8d860" stroke="#7aa040" stroke-width="0.6"/>
<path d="M1054 7.5 H931.5 V24.5 H1054" fill="none" stroke="#3c393c"/>
</svg>
<div style="left:730px;top:6px;width:17px;height:20px;background:linear-gradient(#c8c8c8,#8a8a8a)"></div>
<svg style="left:730px;top:6px" width="17" height="20"><path d="M8.5 4 l4 4 h-8z M8.5 16 l4-4 h-8z" fill="#5a5a5a"/></svg>
<div class="t" style="left:619px;top:9px;font-size:12.85px;line-height:16px;color:#e8e8e8;font-weight:400;">Show</div>
<div style="left:932px;top:8px;width:122px;height:16px;overflow:hidden"><div class="t" style="left:3px;top:-1px;font-size:12.3px;line-height:16px;color:#5a5858">Instantiate new Element</div></div>
<div style="left:522px;top:34px;width:528px;height:21px;background:#2a2829"></div>
<svg style="left:0;top:0" width="1061" height="300">
<path d="M527 44.5 l5-5 v2.5 h4 v5 h-4 v2.5z" fill="#e0e0e0"/>
<g fill="#5a5658"><rect x="544" y="39" width="1" height="11"/><rect x="723" y="39" width="1" height="11"/><rect x="745" y="39" width="1" height="11"/><rect x="767" y="39" width="1" height="11"/><rect x="789" y="39" width="1" height="11"/><rect x="811" y="39" width="1" height="11"/><rect x="833" y="39" width="1" height="11"/><rect x="1027" y="39" width="1" height="11"/></g>
<path d="M729 44.5 l3.2 3.2 6-6.5" fill="none" stroke="#f0f0f0" stroke-width="2.2"/>
<ellipse cx="755.5" cy="44.5" rx="5.5" ry="3.3" fill="#9a9a9a"/><ellipse cx="755.5" cy="44.5" rx="2.5" ry="2" fill="#606060"/>
<path d="M793 47 l6-7 h3 v3 l-6 7 z" fill="url(#rainb)"/>
<defs><linearGradient id="rainb" x1="0" y1="1" x2="1" y2="0"><stop offset="0" stop-color="#e0d020"/><stop offset="0.5" stop-color="#40d080"/><stop offset="1" stop-color="#e040a0"/></linearGradient></defs>
<rect x="817.5" y="44" width="7.5" height="6" fill="#e0e0e0"/><path d="M819 44 v-2 a2.3 2.3 0 0 1 4.6 0 v2" fill="none" stroke="#e0e0e0" stroke-width="1.3"/>
<g stroke="#c8c8c8" stroke-width="1" fill="none"><path d="M1029 45 h3 l2-4 2 8 2-6 1.5 2 h5.5"/><rect x="1033.5" y="39.5" width="8" height="10" stroke="#888"/></g>
</svg>
<div class="t" style="left:554px;top:37px;font-size:12.5px;line-height:16px;color:#f4f4f4;font-weight:700;letter-spacing:-0.55px">Elements</div>
<div class="t" style="left:774px;top:37px;font-size:12px;line-height:16px;color:#d8d8d8;font-weight:700;">S</div>
<div class="t" style="left:843px;top:37px;font-size:12.85px;line-height:16px;color:#f4f4f4;font-weight:700;letter-spacing:-0.6px">Value</div>
<div style="left:522px;top:130px;width:532px;height:22px;background:#2a3148;border-top:1px solid #3b4668;border-bottom:1px solid #3b4668"></div>
<div style="left:1048px;top:131px;width:2px;height:20px;background:#7a7ac8"></div>
<svg style="left:0;top:0" width="1061" height="300">
<path d="M524.5 72.5 l8.5-8.5 v2.5 h6 v12 h-6 v2.5z" fill="#5ad28a"/>
<path d="M524.5 95.5 l8-8 v16z" fill="#2c2a2c"/>
<path d="M524.5 141.5 l8-8 v16z" fill="#3b4660"/>
<path d="M551.5 71 l3 3 3-3" fill="none" stroke="#c0c0c0" stroke-width="1.1"/>
<path d="M561.5 94 l3 3 3-3" fill="none" stroke="#c0c0c0" stroke-width="1.1"/>
<g><path d="M569 77 l6 4 h15 v-3 l-6-4 h-15z" fill="#177024" stroke="#0c3012" stroke-width="0.6"/><line x1="576" y1="78" x2="588" y2="78" stroke="#6a8aa0" stroke-width="0.8"/><path d="M569 73.5 l6 4 h15 v-3 l-6-4 h-15z" fill="#1e7a2e" stroke="#3a8a5a" stroke-width="0.7"/><line x1="576" y1="74.5" x2="588" y2="74.5" stroke="#6a8aa0" stroke-width="0.8"/><path d="M569 70 l6 4 h15 v-3 l-6-4 h-15z" fill="#1e7a2e" stroke="#3a8a5a" stroke-width="0.7"/><line x1="576" y1="71" x2="588" y2="71" stroke="#6a8aa0" stroke-width="0.8"/><path d="M569 66.5 l6 4 h15 v-3 l-6-4 h-15z" fill="#1e7a2e" stroke="#3a8a5a" stroke-width="0.7"/><line x1="576" y1="67.5" x2="588" y2="67.5" stroke="#6a8aa0" stroke-width="0.8"/></g>
<rect x="580" y="86" width="16" height="16" fill="#3a4a80" stroke="#8898e0" stroke-width="1"/>
<rect x="584" y="90" width="17" height="16" fill="#4a5a90" stroke="#8898e0" stroke-width="1"/>
<path d="M588 106 v11 h6" fill="none" stroke="#6a8ad0" stroke-width="1"/><path d="M593 115 l2.5 2 -2.5 2z" fill="#6a8ad0"/>
<rect x="596.5" y="110.5" width="14" height="14" fill="#2a2228" stroke="#e0c8b8" stroke-width="1"/>
<g fill="#e0c8b8"><rect x="599" y="114" width="6" height="1.5"/><rect x="601" y="117" width="7" height="1.5"/><rect x="603" y="120" width="5" height="1.5"/></g>
<rect x="591" y="133" width="17" height="17" fill="#2a3050" stroke="#90a8f0" stroke-width="1"/>
<circle cx="599.5" cy="141.5" r="6" fill="none" stroke="#90a8f0" stroke-width="1"/><circle cx="599.5" cy="141.5" r="2.5" fill="none" stroke="#90a8f0" stroke-width="1"/>
<path d="M592 134 l15 15 M607 134 l-15 15" stroke="#90a8f0" stroke-width="0.8"/>
</svg>
<div class="t" style="left:603px;top:65px;font-size:12.85px;line-height:16px;color:#e8e8e8;font-weight:400;">Show</div>
<div class="t" style="left:613px;top:88px;font-size:12.85px;line-height:16px;color:#a8b8e8;font-weight:400;">Audio_Reaction</div>
<div class="t" style="left:623px;top:111px;font-size:12.85px;line-height:16px;color:#e8c8a8;font-weight:400;letter-spacing:0.22px">Main Timeline</div>
<div class="t" style="left:623px;top:134px;font-size:12.85px;line-height:16px;color:#c0ccf0;font-weight:400;">Content Test P...</div>
<svg style="left:0;top:0" width="1061" height="300">
<g><path d="M747 95 Q756 86.5 765 95 Q756 103.5 747 95z" fill="#f4f4f4"/><circle cx="756" cy="95" r="3.6" fill="#3a3a3a"/><circle cx="778" cy="95" r="5.7" fill="#000" stroke="#444" stroke-width="1"/></g>
<g><path d="M747 141 Q756 132.5 765 141 Q756 149.5 747 141z" fill="#f4f4f4"/><circle cx="756" cy="141" r="3.6" fill="#3a3a3a"/><circle cx="778" cy="141" r="5.7" fill="#000" stroke="#444" stroke-width="1"/></g>
</svg>
<div style="left:794px;top:66px;width:12px;height:12px;background:#000;border:1px solid #3a3a3a"></div>
<div style="left:813px;top:63px;width:18px;height:18px;background:#222120;border-radius:2px"></div>
<div style="left:1033px;top:67px;width:11px;height:11px;border:1px solid #3a3838;background:transparent"></div>
<div style="left:794px;top:89px;width:12px;height:12px;background:#000;border:1px solid #3a3a3a"></div>
<div style="left:813px;top:86px;width:18px;height:18px;background:#222120;border-radius:2px"></div>
<div style="left:1033px;top:90px;width:11px;height:11px;border:1px solid #3a3838;background:transparent"></div>
<div style="left:794px;top:112px;width:12px;height:12px;background:#000;border:1px solid #3a3a3a"></div>
<div style="left:813px;top:109px;width:18px;height:18px;background:#222120;border-radius:2px"></div>
<div style="left:1033px;top:113px;width:11px;height:11px;border:1px solid #3a3838;background:transparent"></div>
<div style="left:794px;top:135px;width:12px;height:12px;background:#000;border:1px solid #3a3a3a"></div>
<div style="left:813px;top:132px;width:18px;height:18px;background:#383258;border-radius:2px"></div>
<div style="left:1033px;top:136px;width:11px;height:11px;border:1px solid #3a3838;background:#1c1c24"></div>
<div style="left:836px;top:63px;width:190px;height:18px;background:#2e2c2e"></div>
<div class="t" style="left:841px;top:65px;font-size:12.85px;line-height:16px;color:#8a8888;font-weight:400;letter-spacing:-0.35px">100.0 %</div>
<div style="left:836px;top:86px;width:190px;height:18px;background:#2e2c2e"></div>
<div class="t" style="left:841px;top:88px;font-size:12.85px;line-height:16px;color:#e8e8e8;font-weight:400;letter-spacing:-0.35px">100.0 %</div>
<div style="left:836px;top:132px;width:190px;height:18px;background:#3a4560"></div>
<div class="t" style="left:841px;top:134px;font-size:12.85px;line-height:16px;color:#e8e8e8;font-weight:400;letter-spacing:-0.35px">100.0 %</div>
<svg style="left:1014px;top:86px" width="10" height="18"><path d="M5 2 l4 5 h-8z M5 16 l4-5 h-8z" fill="#6a6a6a"/></svg>
<svg style="left:1014px;top:132px" width="10" height="18"><path d="M5 2 l4 5 h-8z M5 16 l4-5 h-8z" fill="#8a8a8a"/></svg>
<div style="left:833px;top:107px;width:17px;height:22px;background:#2a2a2a;border-radius:2px"></div>
<div style="left:852px;top:107px;width:22px;height:22px;background:#2a2a2a;border-radius:2px"></div>
<div style="left:876px;top:107px;width:21px;height:22px;background:#2a2a2a;border-radius:2px"></div>
<div style="left:900px;top:107px;width:21px;height:22px;background:#2a2a2a;border-radius:2px"></div>
<div style="left:926px;top:107px;width:21px;height:22px;background:#2a2a2a;border-radius:2px"></div>
<svg style="left:0;top:0" width="1061" height="300">
<g fill="#e8e8e8"><rect x="836" y="112" width="2.5" height="12"/><path d="M847 112 v12 l-8-6z"/>
<rect x="858" y="112" width="3.5" height="12"/><rect x="864" y="112" width="3.5" height="12"/>
<path d="M881 111 v14 l12-7z"/>
<path d="M904 112 v12 l8-6z"/><rect x="912.5" y="112" width="2.5" height="12"/>
<path d="M930 116 h8 l3 2 h4 v2 h-15z"/></g>
<path d="M996 113 l3.5 4 h-7z M996 124 l3.5-4 h-7z" fill="#5a5a5a"/>
<path d="M1009 118.5 h12 M1017 114.5 l4 4 -4 4" fill="none" stroke="#f0f0f0" stroke-width="1.2"/>
</svg>
<div style="left:1005px;top:107px;width:22px;height:22px;background:#1e1c1e"></div>
<svg style="left:0;top:0" width="1061" height="300"><path d="M1009 118.5 h12 M1017 114.5 l4 4 -4 4" fill="none" stroke="#f0f0f0" stroke-width="1.2"/></svg>
<div class="t" style="left:955px;top:116px;font-size:12px;line-height:16px;color:#8a8a8a;font-weight:400;">x</div>
<div class="t" style="left:965px;top:111px;font-size:12.85px;line-height:16px;color:#e8e8e8;font-weight:400;">1.0</div>
<svg style="left:0;top:0" width="1061" height="300">
<circle cx="536" cy="229" r="5" fill="#c8d8e8" stroke="#e8e8e8" stroke-width="1.2"/><line x1="539.5" y1="232.5" x2="543.5" y2="236.5" stroke="#c8c8c8" stroke-width="2"/>
<rect x="549.5" y="223.5" width="495" height="16" fill="none" stroke="#3c393c"/>
</svg>
<div class="t" style="left:553px;top:224px;font-size:12.3px;line-height:16px;color:#5a5858;font-weight:400;letter-spacing:-0.3px">Search in Scene (ctrl+f)</div>
<svg style="left:0;top:0" width="1061" height="300">
<g stroke="#e8e8e8" stroke-width="1.1" fill="#1a171a"><line x1="538" y1="266" x2="552" y2="266"/><line x1="538" y1="271.5" x2="552" y2="271.5"/><line x1="538" y1="277" x2="552" y2="277"/>
<circle cx="545.5" cy="266" r="2"/><circle cx="547.5" cy="271.5" r="2"/><circle cx="541" cy="277" r="2"/></g>
<path d="M558 268 h5 l-2.5 3.5 z" fill="#6e6a6e"/>
<path d="M589 262 l4.5 4.5 -3 1 -3.5 3.5 0.5 3 -2 1 -7-7 1-2 3 0.5 3.5-3.5 1-3z" fill="none" stroke="#d0d0d0" stroke-width="1.1" stroke-linejoin="round"/>
<line x1="580.5" y1="272.5" x2="575.5" y2="280" stroke="#d0d0d0" stroke-width="1.2"/>
<rect x="598.5" y="258.5" width="148" height="21" fill="none" stroke="#3c393c"/>
<path d="M603 263 h10 v8 l-5 3 -5-3z" fill="#5a70c0" stroke="#8aa0e0" stroke-width="0.8"/>
<path d="M757 269 l5-5 v3 h9 v4 h-9 v3 z" fill="#f0f0f0"/><rect x="756" y="276" width="17" height="1.6" fill="#4c4f4c"/>
<path d="M798 269 l-5-5 v3 h-9 v4 h9 v3 z" fill="#8c9a80"/><rect x="783" y="276" width="17" height="1.6" fill="#3c3f3c"/>
</svg>
<div class="t" style="left:618px;top:262px;font-size:12.85px;line-height:16px;color:#e8e8e8;font-weight:400;letter-spacing:-0.5px">Content Test Pattern</div>
<div style="left:822px;top:258px;width:89px;height:21px;background:#393939;border-radius:3px"></div>
<div style="left:916px;top:258px;width:83px;height:21px;background:#2a2a2a;border:1px solid #333;border-radius:3px"></div>
<svg style="left:0;top:0" width="1061" height="300">
<rect x="826" y="263" width="10" height="10" fill="#3050b0" stroke="#90b0ff" stroke-width="0.8"/><path d="M826 263 l10 10 M836 263 l-10 10" stroke="#a0c0ff" stroke-width="0.8"/>
<rect x="921" y="263" width="9" height="9" fill="#3a4a90" stroke="#8aa0e0" stroke-width="0.8"/><path d="M925.5 265 v5 M923 267.5 h5" stroke="#d0d8ff" stroke-width="0.8"/>
<rect x="1032.5" y="259.5" width="20" height="20" fill="#000" stroke="#3a3a3a"/>
<g fill="#4a4a4a"><rect x="1035" y="262" width="15" height="2.5"/><rect x="1035" y="266.5" width="11" height="6"/><rect x="1047" y="266.5" width="3" height="6"/><rect x="1035" y="274.5" width="15" height="2.5"/></g>
</svg>
<div class="t" style="left:842px;top:262px;font-size:12.85px;line-height:16px;color:#e8e8e8;font-weight:400;">Generator</div>
<div class="t" style="left:936px;top:262px;font-size:12.85px;line-height:16px;color:#8a8888;font-weight:400;">Renderer</div>
<div style="left:522px;top:290px;width:532px;height:498px;overflow:hidden">
<div style="left:4px;top:288px;width:506px;height:22px;background:#2b3350;border:1px solid #46538a"></div><div class="t" style="left:63px;top:-7px;font-size:12.85px;line-height:16px;color:#d8d8d8;font-weight:400;">Colored Checker Board</div><div class="t" style="left:63px;top:16px;font-size:12.85px;line-height:16px;color:#d8d8d8;font-weight:400;">Grid</div><div class="t" style="left:63px;top:39px;font-size:12.85px;line-height:16px;color:#d8d8d8;font-weight:400;">Tile Labels</div><div class="t" style="left:63px;top:62px;font-size:12.85px;line-height:16px;color:#d8d8d8;font-weight:400;">Corner Circles</div><div class="t" style="left:63px;top:85px;font-size:12.85px;line-height:16px;color:#d8d8d8;font-weight:400;">Corner Circles Count</div><div class="t" style="left:63px;top:108px;font-size:12.85px;line-height:16px;color:#d8d8d8;font-weight:400;">Centered Circles</div><div class="t" style="left:63px;top:131px;font-size:12.85px;line-height:16px;color:#d8d8d8;font-weight:400;">Centered Circles Count</div><div class="t" style="left:63px;top:154px;font-size:12.85px;line-height:16px;color:#d8d8d8;font-weight:400;">Diagonals</div><div class="t" style="left:63px;top:177px;font-size:12.85px;line-height:16px;color:#d8d8d8;font-weight:400;">Edges</div><div class="t" style="left:63px;top:200px;font-size:12.85px;line-height:16px;color:#d8d8d8;font-weight:400;">Corners</div><div class="t" style="left:63px;top:223px;font-size:12.85px;line-height:16px;color:#f0f0f0;font-weight:700;">Logo</div><div class="t" style="left:73px;top:246px;font-size:12.85px;line-height:16px;color:#d8d8d8;font-weight:400;">Enabled</div><div class="t" style="left:73px;top:269px;font-size:12.85px;line-height:16px;color:#d8d8d8;font-weight:400;">Alpha</div><div class="t" style="left:73px;top:292px;font-size:12.85px;line-height:16px;color:#f0f0f0;font-weight:700;">Size</div><div class="t" style="left:63px;top:315px;font-size:12.85px;line-height:16px;color:#d8d8d8;font-weight:400;">Label Text</div><div class="t" style="left:63px;top:338px;font-size:12.85px;line-height:16px;color:#d8d8d8;font-weight:400;">Resolution Text</div><div class="t" style="left:63px;top:361px;font-size:12.85px;line-height:16px;color:#d8d8d8;font-weight:400;">Text Position</div><div class="t" style="left:63px;top:384px;font-size:12.85px;line-height:16px;color:#d8d8d8;font-weight:400;">Moving Bars Period</div><div class="t" style="left:63px;top:407px;font-size:12.85px;line-height:16px;color:#d8d8d8;font-weight:400;">Horizontal Bar</div><div class="t" style="left:63px;top:430px;font-size:12.85px;line-height:16px;color:#d8d8d8;font-weight:400;">Vertical Bar</div><div style="left:232px;top:-11px;width:22px;height:22px;background:#2c2b2c;border-radius:2px"></div><div style="left:257px;top:-11px;width:101px;height:21px;background:#1c1a1c;border:1px solid #3a3838"></div><div style="left:363px;top:-10px;width:18px;height:20px;background:#9a9a9a"></div><div class="t" style="left:389px;top:-7px;font-size:12.85px;line-height:16px;color:#e8e8e8;font-weight:400;">4</div><div style="left:434px;top:-10px;width:22px;height:20px;background:#303a70;border:1px solid #6a78c0;border-radius:2px"></div><div class="t" style="left:464px;top:-7px;font-size:12.85px;line-height:16px;color:#e8e8e8;font-weight:400;">4</div><div class="t" style="left:278px;top:-7px;font-size:12.85px;line-height:16px;color:#e8e8e8;font-weight:400;">Horizontal</div><div style="left:232px;top:12px;width:22px;height:22px;background:#2c2b2c;border-radius:2px"></div><div style="left:257px;top:13px;width:100px;height:20px;background-color:#fbfbfb;background-image:linear-gradient(45deg,#ececec 25%,transparent 25%,transparent 75%,#ececec 75%),linear-gradient(45deg,#ececec 25%,transparent 25%,transparent 75%,#ececec 75%);background-size:12px 12px;background-position:0 0,6px 6px;border:1px solid #2a2a2a"></div><div class="t" style="left:257px;top:15px;width:100px;text-align:center;font-size:12.85px;line-height:16px;color:#1a1a1a">FFFFFFB2</div><div style="left:362px;top:13px;width:18px;height:20px;background:#2c2b2c"></div><div class="t" style="left:389px;top:16px;font-size:12.85px;line-height:16px;color:#e8e8e8;font-weight:400;">1</div><div style="left:232px;top:58px;width:22px;height:22px;background:#2c2b2c;border-radius:2px"></div><div style="left:257px;top:59px;width:100px;height:20px;background-color:#fbfbfb;background-image:linear-gradient(45deg,#ececec 25%,transparent 25%,transparent 75%,#ececec 75%),linear-gradient(45deg,#ececec 25%,transparent 25%,transparent 75%,#ececec 75%);background-size:12px 12px;background-position:0 0,6px 6px;border:1px solid #2a2a2a"></div><div class="t" style="left:257px;top:61px;width:100px;text-align:center;font-size:12.85px;line-height:16px;color:#1a1a1a">FFFFFFB2</div><div style="left:362px;top:59px;width:18px;height:20px;background:#2c2b2c"></div><div class="t" style="left:389px;top:62px;font-size:12.85px;line-height:16px;color:#e8e8e8;font-weight:400;">2</div><div style="left:232px;top:104px;width:22px;height:22px;background:#2c2b2c;border-radius:2px"></div><div style="left:257px;top:105px;width:100px;height:20px;background-color:#fbfbfb;background-image:linear-gradient(45deg,#ececec 25%,transparent 25%,transparent 75%,#ececec 75%),linear-gradient(45deg,#ececec 25%,transparent 25%,transparent 75%,#ececec 75%);background-size:12px 12px;background-position:0 0,6px 6px;border:1px solid #2a2a2a"></div><div class="t" style="left:257px;top:107px;width:100px;text-align:center;font-size:12.85px;line-height:16px;color:#1a1a1a">FFFFFFB2</div><div style="left:362px;top:105px;width:18px;height:20px;background:#2c2b2c"></div><div class="t" style="left:389px;top:108px;font-size:12.85px;line-height:16px;color:#e8e8e8;font-weight:400;">2</div><div style="left:232px;top:150px;width:22px;height:22px;background:#2c2b2c;border-radius:2px"></div><div style="left:257px;top:151px;width:100px;height:20px;background-color:#fbfbfb;background-image:linear-gradient(45deg,#ececec 25%,transparent 25%,transparent 75%,#ececec 75%),linear-gradient(45deg,#ececec 25%,transparent 25%,transparent 75%,#ececec 75%);background-size:12px 12px;background-position:0 0,6px 6px;border:1px solid #2a2a2a"></div><div class="t" style="left:257px;top:153px;width:100px;text-align:center;font-size:12.85px;line-height:16px;color:#1a1a1a">FFFFFFB2</div><div style="left:362px;top:151px;width:18px;height:20px;background:#2c2b2c"></div><div class="t" style="left:389px;top:154px;font-size:12.85px;line-height:16px;color:#e8e8e8;font-weight:400;">1</div><div style="left:232px;top:35px;width:22px;height:22px;background:#2c2b2c;border-radius:2px"></div><div style="left:239px;top:44.5px;width:9px;height:3px;background:#4a4a4a;border-radius:1px"></div><div style="left:257px;top:36px;width:59px;height:20px;background:#fff;border:1px solid #2a2a2a"></div><div class="t" style="left:257px;top:38px;width:59px;text-align:center;font-size:12.85px;line-height:16px;color:#1a1a1a">FFFFFF...</div><div style="left:320px;top:36px;width:18px;height:20px;background:#2c2b2c"></div><div class="t" style="left:346px;top:39px;font-size:12.85px;line-height:16px;color:#7a7878;font-weight:400;">70.0 %</div><div style="left:426px;top:35px;width:83px;height:22px;background:#222122;border:1px solid #2a2a2a;border-radius:3px"></div><div class="t" style="left:237px;top:85px;font-size:12.85px;line-height:16px;color:#e8e8e8;font-weight:400;">1</div><div class="t" style="left:237px;top:131px;font-size:12.85px;line-height:16px;color:#e8e8e8;font-weight:400;">5</div><div style="left:232px;top:173px;width:22px;height:22px;background:#2c2b2c;border-radius:2px"></div><div style="left:257px;top:174px;width:100px;height:20px;background:#0000ff;border:1px solid #2a2a2a"></div><div class="t" style="left:257px;top:176px;width:100px;text-align:center;font-size:12.85px;line-height:16px;color:#ffffff">0000FFFF</div><div style="left:362px;top:174px;width:18px;height:20px;background:#2c2b2c"></div><div class="t" style="left:389px;top:177px;font-size:12.85px;line-height:16px;color:#e8e8e8;font-weight:400;">1</div><div style="left:232px;top:196px;width:22px;height:22px;background:#2c2b2c;border-radius:2px"></div><div style="left:257px;top:197px;width:100px;height:20px;background:#ff0000;border:1px solid #2a2a2a"></div><div class="t" style="left:257px;top:199px;width:100px;text-align:center;font-size:12.85px;line-height:16px;color:#ffffff">FF0000FF</div><div style="left:362px;top:197px;width:18px;height:20px;background:#2c2b2c"></div><div class="t" style="left:389px;top:200px;font-size:12.85px;line-height:16px;color:#e8e8e8;font-weight:400;">1</div><div style="left:232px;top:219px;width:22px;height:22px;background:#2c2b2c;border-radius:2px"></div><div class="t" style="left:261px;top:223px;font-size:12.85px;line-height:16px;color:#e8e8e8;font-weight:400;">73.9 %</div><div class="t" style="left:388px;top:223px;font-size:12.85px;line-height:16px;color:#e8e8e8;font-weight:400;">46.946 %</div><div style="left:234px;top:243px;width:273px;height:20px;background:#2e2d2e;border-radius:3px"></div><div class="t" style="left:237px;top:269px;font-size:12.85px;line-height:16px;color:#e8e8e8;font-weight:400;">73.9 %</div><div class="t" style="left:237px;top:292px;font-size:12.85px;line-height:16px;color:#e8e8e8;font-weight:400;">46.946 %</div><div style="left:232px;top:311px;width:22px;height:22px;background:#2c2b2c;border-radius:2px"></div><div style="left:257px;top:312px;width:100px;height:20px;background:#ffffff;border:1px solid #2a2a2a"></div><div class="t" style="left:257px;top:314px;width:100px;text-align:center;font-size:12.85px;line-height:16px;color:#1a1a1a">FFFFFFFF</div><div style="left:362px;top:312px;width:18px;height:20px;background:#2c2b2c"></div><div class="t" style="left:389px;top:315px;font-size:12.85px;line-height:16px;color:#e8e8e8;font-weight:400;">15.0 %</div><div style="left:232px;top:334px;width:22px;height:22px;background:#2c2b2c;border-radius:2px"></div><div style="left:239px;top:343.5px;width:9px;height:3px;background:#4a4a4a;border-radius:1px"></div><div style="left:257px;top:335px;width:100px;height:20px;background-color:#fbfbfb;background-image:linear-gradient(45deg,#ececec 25%,transparent 25%,transparent 75%,#ececec 75%),linear-gradient(45deg,#ececec 25%,transparent 25%,transparent 75%,#ececec 75%);background-size:12px 12px;background-position:0 0,6px 6px;border:1px solid #2a2a2a"></div><div class="t" style="left:257px;top:337px;width:100px;text-align:center;font-size:12.85px;line-height:16px;color:#1a1a1a">FFFFFFB2</div><div style="left:362px;top:335px;width:18px;height:20px;background:#2c2b2c"></div><div class="t" style="left:389px;top:338px;font-size:12.85px;line-height:16px;color:#7a7878;font-weight:400;">10.0 %</div><div style="left:232px;top:357px;width:277px;height:23px;background:#1c1a1c;border:1px solid #3a3838"></div><div style="left:491px;top:358px;width:17px;height:21px;background:linear-gradient(#c8c8c8,#8a8a8a)"></div><div class="t" style="left:253px;top:361px;font-size:12.85px;line-height:16px;color:#e8e8e8;font-weight:400;">Middle Center</div><div class="t" style="left:237px;top:384px;font-size:12.85px;line-height:16px;color:#e8e8e8;font-weight:400;">0:00:03:00</div><div style="left:232px;top:403px;width:22px;height:22px;background:#2c2b2c;border-radius:2px"></div><div style="left:239px;top:412.5px;width:9px;height:3px;background:#4a4a4a;border-radius:1px"></div><div style="left:257px;top:404px;width:100px;height:20px;background:#ff0000;border:1px solid #2a2a2a"></div><div class="t" style="left:257px;top:406px;width:100px;text-align:center;font-size:12.85px;line-height:16px;color:#ffffff">FF0000FF</div><div style="left:362px;top:404px;width:18px;height:20px;background:#2c2b2c"></div><div class="t" style="left:389px;top:407px;font-size:12.85px;line-height:16px;color:#7a7878;font-weight:400;">4</div><div style="left:232px;top:426px;width:22px;height:22px;background:#2c2b2c;border-radius:2px"></div><div style="left:239px;top:435.5px;width:9px;height:3px;background:#4a4a4a;border-radius:1px"></div><div style="left:257px;top:427px;width:100px;height:20px;background:#ff0000;border:1px solid #2a2a2a"></div><div class="t" style="left:257px;top:429px;width:100px;text-align:center;font-size:12.85px;line-height:16px;color:#ffffff">FF0000FF</div><div style="left:362px;top:427px;width:18px;height:20px;background:#2c2b2c"></div><div class="t" style="left:389px;top:430px;font-size:12.85px;line-height:16px;color:#7a7878;font-weight:400;">4</div><div style="left:516px;top:169px;width:7px;height:325px;background:#2a292a;border-radius:4px"></div><svg style="left:0;top:0" width="532" height="498" viewBox="522 290 532 498"><path d="M535 286.5 l3.5 3.5 -3.5 3.5" fill="none" stroke="#c8c8c8" stroke-width="1.1"/><path d="M535 309.5 l3.5 3.5 -3.5 3.5" fill="none" stroke="#c8c8c8" stroke-width="1.1"/><rect x="553.5" y="305.0" width="16" height="16" fill="#3a3a3a" stroke="#9a9a9a"/><line x1="557.5" y1="305.5" x2="557.5" y2="320.5" stroke="#9a9a9a" stroke-width="1"/><line x1="561.5" y1="305.5" x2="561.5" y2="320.5" stroke="#9a9a9a" stroke-width="1"/><line x1="565.5" y1="305.5" x2="565.5" y2="320.5" stroke="#9a9a9a" stroke-width="1"/><line x1="554" y1="310.0" x2="569" y2="310.0" stroke="#9a9a9a" stroke-width="1"/><line x1="554" y1="316.0" x2="569" y2="316.0" stroke="#9a9a9a" stroke-width="1"/><g fill="#e02020"><rect x="554.5" y="306.0" width="1.3" height="1.3"/><rect x="567.2" y="306.0" width="1.3" height="1.3"/><rect x="554.5" y="318.7" width="1.3" height="1.3"/><rect x="567.2" y="318.7" width="1.3" height="1.3"/></g><path d="M535 332.5 l3.5 3.5 -3.5 3.5" fill="none" stroke="#c8c8c8" stroke-width="1.1"/><path d="M535 355.5 l3.5 3.5 -3.5 3.5" fill="none" stroke="#c8c8c8" stroke-width="1.1"/><rect x="553.5" y="351.0" width="16" height="16" fill="#3a3a3a" stroke="#9a9a9a"/><line x1="557.5" y1="351.5" x2="557.5" y2="366.5" stroke="#9a9a9a" stroke-width="1"/><line x1="561.5" y1="351.5" x2="561.5" y2="366.5" stroke="#9a9a9a" stroke-width="1"/><line x1="565.5" y1="351.5" x2="565.5" y2="366.5" stroke="#9a9a9a" stroke-width="1"/><line x1="554" y1="356.0" x2="569" y2="356.0" stroke="#9a9a9a" stroke-width="1"/><line x1="554" y1="362.0" x2="569" y2="362.0" stroke="#9a9a9a" stroke-width="1"/><g fill="#e02020"><rect x="554.5" y="352.0" width="1.3" height="1.3"/><rect x="567.2" y="352.0" width="1.3" height="1.3"/><rect x="554.5" y="364.7" width="1.3" height="1.3"/><rect x="567.2" y="364.7" width="1.3" height="1.3"/></g><rect x="553.5" y="374.0" width="16" height="16" fill="#b8b8c0" stroke="#d0d0d0"/><path d="M558 374.5 h7 l4 4 v7 l-4 4 h-7 l-4-4 v-7z" fill="#4a4a4a"/><rect x="561" y="379.5" width="1" height="5" fill="#e0e0e0"/><path d="M535 401.5 l3.5 3.5 -3.5 3.5" fill="none" stroke="#c8c8c8" stroke-width="1.1"/><rect x="553.5" y="397.0" width="16" height="16" fill="#3a3a3a" stroke="#9a9a9a"/><line x1="557.5" y1="397.5" x2="557.5" y2="412.5" stroke="#9a9a9a" stroke-width="1"/><line x1="561.5" y1="397.5" x2="561.5" y2="412.5" stroke="#9a9a9a" stroke-width="1"/><line x1="565.5" y1="397.5" x2="565.5" y2="412.5" stroke="#9a9a9a" stroke-width="1"/><line x1="554" y1="402.0" x2="569" y2="402.0" stroke="#9a9a9a" stroke-width="1"/><line x1="554" y1="408.0" x2="569" y2="408.0" stroke="#9a9a9a" stroke-width="1"/><g fill="#e02020"><rect x="554.5" y="398.0" width="1.3" height="1.3"/><rect x="567.2" y="398.0" width="1.3" height="1.3"/><rect x="554.5" y="410.7" width="1.3" height="1.3"/><rect x="567.2" y="410.7" width="1.3" height="1.3"/></g><rect x="553.5" y="420.0" width="16" height="16" fill="#b8b8c0" stroke="#d0d0d0"/><path d="M558 420.5 h7 l4 4 v7 l-4 4 h-7 l-4-4 v-7z" fill="#4a4a4a"/><rect x="561" y="425.5" width="1" height="5" fill="#e0e0e0"/><path d="M535 447.5 l3.5 3.5 -3.5 3.5" fill="none" stroke="#c8c8c8" stroke-width="1.1"/><rect x="553.5" y="443.0" width="16" height="16" fill="#3a3a3a" stroke="#9a9a9a"/><line x1="557.5" y1="443.5" x2="557.5" y2="458.5" stroke="#9a9a9a" stroke-width="1"/><line x1="561.5" y1="443.5" x2="561.5" y2="458.5" stroke="#9a9a9a" stroke-width="1"/><line x1="565.5" y1="443.5" x2="565.5" y2="458.5" stroke="#9a9a9a" stroke-width="1"/><line x1="554" y1="448.0" x2="569" y2="448.0" stroke="#9a9a9a" stroke-width="1"/><line x1="554" y1="454.0" x2="569" y2="454.0" stroke="#9a9a9a" stroke-width="1"/><g fill="#e02020"><rect x="554.5" y="444.0" width="1.3" height="1.3"/><rect x="567.2" y="444.0" width="1.3" height="1.3"/><rect x="554.5" y="456.7" width="1.3" height="1.3"/><rect x="567.2" y="456.7" width="1.3" height="1.3"/></g><path d="M535 470.5 l3.5 3.5 -3.5 3.5" fill="none" stroke="#c8c8c8" stroke-width="1.1"/><rect x="553.5" y="466.0" width="16" height="16" fill="#3a3a3a" stroke="#9a9a9a"/><line x1="557.5" y1="466.5" x2="557.5" y2="481.5" stroke="#9a9a9a" stroke-width="1"/><line x1="561.5" y1="466.5" x2="561.5" y2="481.5" stroke="#9a9a9a" stroke-width="1"/><line x1="565.5" y1="466.5" x2="565.5" y2="481.5" stroke="#9a9a9a" stroke-width="1"/><line x1="554" y1="471.0" x2="569" y2="471.0" stroke="#9a9a9a" stroke-width="1"/><line x1="554" y1="477.0" x2="569" y2="477.0" stroke="#9a9a9a" stroke-width="1"/><g fill="#e02020"><rect x="554.5" y="467.0" width="1.3" height="1.3"/><rect x="567.2" y="467.0" width="1.3" height="1.3"/><rect x="554.5" y="479.7" width="1.3" height="1.3"/><rect x="567.2" y="479.7" width="1.3" height="1.3"/></g><path d="M535 493.5 l3.5 3.5 -3.5 3.5" fill="none" stroke="#c8c8c8" stroke-width="1.1"/><rect x="553.5" y="489.0" width="16" height="16" fill="#3a3a3a" stroke="#9a9a9a"/><line x1="557.5" y1="489.5" x2="557.5" y2="504.5" stroke="#9a9a9a" stroke-width="1"/><line x1="561.5" y1="489.5" x2="561.5" y2="504.5" stroke="#9a9a9a" stroke-width="1"/><line x1="565.5" y1="489.5" x2="565.5" y2="504.5" stroke="#9a9a9a" stroke-width="1"/><line x1="554" y1="494.0" x2="569" y2="494.0" stroke="#9a9a9a" stroke-width="1"/><line x1="554" y1="500.0" x2="569" y2="500.0" stroke="#9a9a9a" stroke-width="1"/><g fill="#e02020"><rect x="554.5" y="490.0" width="1.3" height="1.3"/><rect x="567.2" y="490.0" width="1.3" height="1.3"/><rect x="554.5" y="502.7" width="1.3" height="1.3"/><rect x="567.2" y="502.7" width="1.3" height="1.3"/></g><path d="M533.5 518.5 l3.5 3.5 3.5-3.5" fill="none" stroke="#c8c8c8" stroke-width="1.1"/><path d="M554.5 511 q8-2 15 1 v12 l-2 2 q-6 1-10 4 l-3-4z" fill="#000" stroke="#e8e8e8" stroke-width="1.1"/><circle cx="571.5" cy="543" r="7.5" fill="#b8b8b8"/><circle cx="571.5" cy="543" r="5.5" fill="#3a3a3a"/><circle cx="571.5" cy="543" r="1.7" fill="#c8c8c8"/><rect x="563.5" y="558.0" width="16" height="16" fill="#b8b8c0" stroke="#d0d0d0"/><circle cx="571.5" cy="566.0" r="7.5" fill="#4a4a4a"/><rect x="563.5" y="581.0" width="16" height="16" fill="#b8b8c0" stroke="#d0d0d0"/><circle cx="571.5" cy="589.0" r="7.5" fill="#4a4a4a"/><path d="M535 608.5 l3.5 3.5 -3.5 3.5" fill="none" stroke="#c8c8c8" stroke-width="1.1"/><rect x="553.5" y="604.0" width="16" height="16" fill="#3a3a3a" stroke="#9a9a9a"/><path d="M535 631.5 l3.5 3.5 -3.5 3.5" fill="none" stroke="#c8c8c8" stroke-width="1.1"/><rect x="553.5" y="627.0" width="16" height="16" fill="#3a3a3a" stroke="#9a9a9a"/><rect x="553.5" y="650" width="16" height="16" fill="#3a3a3a" stroke="#b0b0b0"/><rect x="558.5" y="653" width="8" height="11" fill="none" stroke="#c0c0c0"/><line x1="558.5" y1="658" x2="566.5" y2="658" stroke="#c0c0c0"/><rect x="555" y="651.5" width="2" height="2" fill="#e0e0e0"/><rect x="553.5" y="673.0" width="16" height="16" fill="#b8b8c0" stroke="#d0d0d0"/><path d="M558 673.5 h7 l4 4 v7 l-4 4 h-7 l-4-4 v-7z" fill="#4a4a4a"/><rect x="561" y="678.5" width="1" height="5" fill="#e0e0e0"/><path d="M535 700.5 l3.5 3.5 -3.5 3.5" fill="none" stroke="#c8c8c8" stroke-width="1.1"/><rect x="553.5" y="696.0" width="16" height="16" fill="#3a3a3a" stroke="#9a9a9a"/><rect x="554" y="699.5" width="15" height="1.3" fill="#f01010"/><rect x="557" y="696.5" width="1.3" height="15" fill="#f01010"/><path d="M535 723.5 l3.5 3.5 -3.5 3.5" fill="none" stroke="#c8c8c8" stroke-width="1.1"/><rect x="553.5" y="719.0" width="16" height="16" fill="#3a3a3a" stroke="#9a9a9a"/><rect x="554" y="722.5" width="15" height="1.3" fill="#f01010"/><rect x="557" y="719.5" width="1.3" height="15" fill="#f01010"/><path d="M758 289.5 l4.5 4.5 9-9" fill="none" stroke="#f4f4f4" stroke-width="2.2"/><path d="M942 293 h8 l-4 5z M1018 293 h8 l-4 5z M888 285 h12 l-6 6z" fill="#5a5858"/><rect x="784" y="288" width="10" height="7" fill="#e8e8e8"/><path d="M758 312.5 l4.5 4.5 9-9" fill="none" stroke="#f4f4f4" stroke-width="2.2"/><g transform="translate(893,313) rotate(45)"><rect x="-2.5" y="-9" width="5" height="5" rx="2" fill="none" stroke="#d8d8d8" stroke-width="1.1"/><rect x="-3.5" y="-4" width="7" height="2" fill="none" stroke="#d8d8d8" stroke-width="1.1"/><path d="M-1.8 -2 v9 l1.8 2.5 1.8-2.5 v-9" fill="none" stroke="#d8d8d8" stroke-width="1.1"/></g><path d="M1022 305 l4 5 h-8z M1022 321 l4-5 h-8z" fill="#5a5858"/><path d="M758 358.5 l4.5 4.5 9-9" fill="none" stroke="#f4f4f4" stroke-width="2.2"/><g transform="translate(893,359) rotate(45)"><rect x="-2.5" y="-9" width="5" height="5" rx="2" fill="none" stroke="#d8d8d8" stroke-width="1.1"/><rect x="-3.5" y="-4" width="7" height="2" fill="none" stroke="#d8d8d8" stroke-width="1.1"/><path d="M-1.8 -2 v9 l1.8 2.5 1.8-2.5 v-9" fill="none" stroke="#d8d8d8" stroke-width="1.1"/></g><path d="M1022 351 l4 5 h-8z M1022 367 l4-5 h-8z" fill="#5a5858"/><path d="M758 404.5 l4.5 4.5 9-9" fill="none" stroke="#f4f4f4" stroke-width="2.2"/><g transform="translate(893,405) rotate(45)"><rect x="-2.5" y="-9" width="5" height="5" rx="2" fill="none" stroke="#d8d8d8" stroke-width="1.1"/><rect x="-3.5" y="-4" width="7" height="2" fill="none" stroke="#d8d8d8" stroke-width="1.1"/><path d="M-1.8 -2 v9 l1.8 2.5 1.8-2.5 v-9" fill="none" stroke="#d8d8d8" stroke-width="1.1"/></g><path d="M1022 397 l4 5 h-8z M1022 413 l4-5 h-8z" fill="#5a5858"/><path d="M758 450.5 l4.5 4.5 9-9" fill="none" stroke="#f4f4f4" stroke-width="2.2"/><g transform="translate(893,451) rotate(45)"><rect x="-2.5" y="-9" width="5" height="5" rx="2" fill="none" stroke="#d8d8d8" stroke-width="1.1"/><rect x="-3.5" y="-4" width="7" height="2" fill="none" stroke="#d8d8d8" stroke-width="1.1"/><path d="M-1.8 -2 v9 l1.8 2.5 1.8-2.5 v-9" fill="none" stroke="#d8d8d8" stroke-width="1.1"/></g><path d="M1022 443 l4 5 h-8z M1022 459 l4-5 h-8z" fill="#5a5858"/><g transform="translate(851,336) rotate(45)"><rect x="-2.5" y="-9" width="5" height="5" rx="2" fill="none" stroke="#d8d8d8" stroke-width="1.1"/><rect x="-3.5" y="-4" width="7" height="2" fill="none" stroke="#d8d8d8" stroke-width="1.1"/><path d="M-1.8 -2 v9 l1.8 2.5 1.8-2.5 v-9" fill="none" stroke="#d8d8d8" stroke-width="1.1"/></g><path d="M982 335.5 l4.5 4.5 9-9" fill="none" stroke="#4a4a4a" stroke-width="2.4"/><path d="M1022 374 l4 5 h-8z M1022 390 l4-5 h-8z" fill="#5a5858"/><path d="M1022 420 l4 5 h-8z M1022 436 l4-5 h-8z" fill="#5a5858"/><path d="M758 473.5 l4.5 4.5 9-9" fill="none" stroke="#f4f4f4" stroke-width="2.2"/><g transform="translate(893,474) rotate(45)"><rect x="-2.5" y="-9" width="5" height="5" rx="2" fill="none" stroke="#d8d8d8" stroke-width="1.1"/><rect x="-3.5" y="-4" width="7" height="2" fill="none" stroke="#d8d8d8" stroke-width="1.1"/><path d="M-1.8 -2 v9 l1.8 2.5 1.8-2.5 v-9" fill="none" stroke="#d8d8d8" stroke-width="1.1"/></g><path d="M1022 466 l4 5 h-8z M1022 482 l4-5 h-8z" fill="#5a5858"/><path d="M758 496.5 l4.5 4.5 9-9" fill="none" stroke="#f4f4f4" stroke-width="2.2"/><g transform="translate(893,497) rotate(45)"><rect x="-2.5" y="-9" width="5" height="5" rx="2" fill="none" stroke="#d8d8d8" stroke-width="1.1"/><rect x="-3.5" y="-4" width="7" height="2" fill="none" stroke="#d8d8d8" stroke-width="1.1"/><path d="M-1.8 -2 v9 l1.8 2.5 1.8-2.5 v-9" fill="none" stroke="#d8d8d8" stroke-width="1.1"/></g><path d="M1022 489 l4 5 h-8z M1022 505 l4-5 h-8z" fill="#5a5858"/><path d="M758 519.5 l4.5 4.5 9-9" fill="none" stroke="#f4f4f4" stroke-width="2.2"/><path d="M895 512 l4 5 h-8z M895 528 l4-5 h-8z" fill="#4a4848"/><path d="M1022 512 l4 5 h-8z M1022 528 l4-5 h-8z" fill="#5a5858"/><path d="M884 542.5 l4.5 4.5 9-9" fill="none" stroke="#f4f4f4" stroke-width="2.2"/><path d="M1022 558 l4 5 h-8z M1022 574 l4-5 h-8z" fill="#5a5858"/><path d="M1022 581 l4 5 h-8z M1022 597 l4-5 h-8z" fill="#6a6a6a"/><path d="M758 611.5 l4.5 4.5 9-9" fill="none" stroke="#f4f4f4" stroke-width="2.2"/><g transform="translate(893,612) rotate(45)"><rect x="-2.5" y="-9" width="5" height="5" rx="2" fill="none" stroke="#d8d8d8" stroke-width="1.1"/><rect x="-3.5" y="-4" width="7" height="2" fill="none" stroke="#d8d8d8" stroke-width="1.1"/><path d="M-1.8 -2 v9 l1.8 2.5 1.8-2.5 v-9" fill="none" stroke="#d8d8d8" stroke-width="1.1"/></g><path d="M1022 604 l4 5 h-8z M1022 620 l4-5 h-8z" fill="#5a5858"/><g transform="translate(893,635) rotate(45)"><rect x="-2.5" y="-9" width="5" height="5" rx="2" fill="none" stroke="#d8d8d8" stroke-width="1.1"/><rect x="-3.5" y="-4" width="7" height="2" fill="none" stroke="#d8d8d8" stroke-width="1.1"/><path d="M-1.8 -2 v9 l1.8 2.5 1.8-2.5 v-9" fill="none" stroke="#d8d8d8" stroke-width="1.1"/></g><path d="M1021.5 652 l4 4 h-8z M1021.5 665 l4-4 h-8z" fill="#5a5a5a"/><rect x="760" y="653" width="10" height="10" fill="#e8e8e8"/><rect x="762" y="655" width="3" height="3" fill="#888"/><rect x="766" y="659" width="3" height="3" fill="#aaa"/><path d="M1022 673 l4 5 h-8z M1022 689 l4-5 h-8z" fill="#5a5858"/><g transform="translate(893,704) rotate(45)"><rect x="-2.5" y="-9" width="5" height="5" rx="2" fill="none" stroke="#d8d8d8" stroke-width="1.1"/><rect x="-3.5" y="-4" width="7" height="2" fill="none" stroke="#d8d8d8" stroke-width="1.1"/><path d="M-1.8 -2 v9 l1.8 2.5 1.8-2.5 v-9" fill="none" stroke="#d8d8d8" stroke-width="1.1"/></g><g transform="translate(893,727) rotate(45)"><rect x="-2.5" y="-9" width="5" height="5" rx="2" fill="none" stroke="#d8d8d8" stroke-width="1.1"/><rect x="-3.5" y="-4" width="7" height="2" fill="none" stroke="#d8d8d8" stroke-width="1.1"/><path d="M-1.8 -2 v9 l1.8 2.5 1.8-2.5 v-9" fill="none" stroke="#d8d8d8" stroke-width="1.1"/></g></svg><div class="t" style="left:41px;top:268.5px;width:17px;text-align:center;font-size:10px;line-height:15px;color:#e8e8e8;font-weight:700">%</div><div class="t" style="left:41px;top:291.5px;width:17px;text-align:center;font-size:10px;line-height:15px;color:#e8e8e8;font-weight:700">%</div><div class="t" style="left:31px;top:313.5px;width:17px;text-align:center;font-size:10px;line-height:15px;color:#d0d0d0;letter-spacing:-0.5px">txt</div><div class="t" style="left:31px;top:336.5px;width:17px;text-align:center;font-size:10px;line-height:15px;color:#d0d0d0;letter-spacing:-0.5px">txt</div>
</div>
<svg style="left:0;top:0" width="520" height="795">
<path d="M118 540 L110 519 Q109 517 106 517 H14 Q11 517 10 519 L3 540 Z" fill="#131a29"/>
<path d="M227 540 L220 519 Q219 517 216 517 H122 Q119 517 118 519 L113 534 V540 Z" fill="#1c191c"/>
<path d="M118 540 L110 519 Q109 517 106 517 H14 Q11 517 10 519 L3 540 Z" fill="#131a29"/>
<rect x="4" y="540.5" width="509" height="246.5" fill="#1a171a" stroke="#18233e" stroke-width="2"/>
</svg>
<svg style="left:0;top:0" width="520" height="795">
<g transform="translate(23.5,528.5)"><circle r="5" fill="#e8e8e8"/><g fill="#e8e8e8"><rect x="-1.6" y="-7" width="3.2" height="3" transform="rotate(0)"/><rect x="-1.6" y="-7" width="3.2" height="3" transform="rotate(45)"/><rect x="-1.6" y="-7" width="3.2" height="3" transform="rotate(90)"/><rect x="-1.6" y="-7" width="3.2" height="3" transform="rotate(135)"/><rect x="-1.6" y="-7" width="3.2" height="3" transform="rotate(180)"/><rect x="-1.6" y="-7" width="3.2" height="3" transform="rotate(225)"/><rect x="-1.6" y="-7" width="3.2" height="3" transform="rotate(270)"/><rect x="-1.6" y="-7" width="3.2" height="3" transform="rotate(315)"/></g><circle r="1.8" fill="#131a29"/></g>
<path d="M39 526 h5.5 l-2.75 3.5z" fill="#6e6a6e"/>
<rect x="125.5" y="521.5" width="15" height="14" fill="#241e24" stroke="#d0c0d0" stroke-width="1"/>
<rect x="128" y="524" width="6" height="1.5" fill="#d070a0"/><rect x="130" y="527" width="7" height="1.5" fill="#70a0d0"/><rect x="132" y="530" width="5" height="1.5" fill="#a0d070"/>
<path d="M145 526 h5.5 l-2.75 3.5z" fill="#6e6a6e"/>
<rect x="16.5" y="547" width="23" height="22" rx="2" fill="#c8c8c8"/>
<g stroke="#222" stroke-width="1.3"><line x1="21.5" y1="550" x2="21.5" y2="566"/><line x1="28" y1="550" x2="28" y2="566"/><line x1="34.5" y1="550" x2="34.5" y2="566"/></g>
<g fill="#222"><rect x="19" y="556" width="5" height="3"/><rect x="25.5" y="560" width="5" height="3"/><rect x="32" y="553" width="5" height="3"/></g>
<rect x="478.5" y="547.5" width="21" height="21" fill="#000" stroke="#3a3a3a"/>
<g fill="#4a4a4a"><rect x="481" y="550" width="16" height="2.5"/><rect x="481" y="554.5" width="11" height="7"/><rect x="493.5" y="554.5" width="3.5" height="7"/><rect x="481" y="563.5" width="16" height="2.5"/></g>
</svg>
<div class="t" style="left:58px;top:521px;font-size:12.85px;line-height:16px;color:#e8e8e8;font-weight:400;">Devices</div>
<div class="t" style="left:164px;top:521px;font-size:12.85px;line-height:16px;color:#a8a6a8;font-weight:400;">Timeline</div>
<div style="left:9px;top:576px;width:20px;height:7px;background:#98b898"></div>
<div style="left:9px;top:593px;width:20px;height:189px;background:#98b898"></div>
<div class="t" style="left:-21px;top:680px;width:80px;height:16px;text-align:center;font-size:12.3px;line-height:16px;color:#1e241e;transform:rotate(-90deg);letter-spacing:0.3px">AUDIO</div>
<div style="left:32px;top:593px;width:458px;height:40px;background:#262426"></div>
<svg style="left:0;top:0" width="520" height="795">
<path d="M47 606 h5 l8-6 v22 l-8-6 h-5z" fill="none" stroke="#e0e0e0" stroke-width="1.3" stroke-linejoin="round"/>
<path d="M63 605 q3 6 0 12 M66.5 602 q5 9 0 18 M70 599.5 q6.5 11.5 0 23" fill="none" stroke="#e0e0e0" stroke-width="1.3"/>
<rect x="47" y="624" width="26" height="3" rx="1.5" fill="none" stroke="#d0d0d0" stroke-width="1"/>
<rect x="93" y="608" width="10" height="10" fill="#1c1a1c"/>
<rect x="464" y="597" width="22" height="32" rx="2" fill="#2e2c2e" stroke="#383638" stroke-width="0.8"/>
<path d="M468 613 h12 M476 609 l4.5 4 -4.5 4" fill="none" stroke="#f0f0f0" stroke-width="1.8"/><line x1="471" y1="608" x2="471" y2="618" stroke="#f0f0f0" stroke-width="1"/>
<path d="M482 642 l3.5 4.5 h-7z M482 653 l3.5-4.5 h-7z" fill="#5a5858"/>
</svg>
<div class="t" style="left:113px;top:598px;font-size:12.85px;line-height:16px;color:#e8e8e8;font-weight:400;letter-spacing:0.4px">Audio Input</div>
<div class="t" style="left:113px;top:614px;font-size:11.85px;line-height:16px;color:#a09ea0;font-weight:400;">DirectSound/Stereo Mix (2- Realtek(R) Audio)</div>
<div class="t" style="left:41px;top:641px;font-size:12.85px;line-height:16px;color:#a09ea0;font-weight:400;">Input Gain</div>
<div class="t" style="left:113px;top:641px;font-size:12.85px;line-height:16px;color:#e89a7a;font-weight:400;letter-spacing:-0.4px">15.0 dB</div>
<div class="t" style="left:37px;top:662px;font-size:12.3px;line-height:16px;color:#a09ea0;font-weight:400;">Left</div>
<div class="t" style="left:37px;top:699px;font-size:12.3px;line-height:16px;color:#a09ea0;font-weight:400;">Right</div>
<svg style="left:0;top:0" width="520" height="795"><rect x="37" y="684" width="2" height="7" fill="#58e894"/><rect x="40" y="684" width="2" height="7" fill="#58e894"/><rect x="43" y="684" width="2" height="7" fill="#58e894"/><rect x="46" y="684" width="2" height="7" fill="#58e894"/><rect x="49" y="684" width="2" height="7" fill="#58e894"/><rect x="52" y="684" width="2" height="7" fill="#58e894"/><rect x="55" y="684" width="2" height="7" fill="#58e894"/><rect x="58" y="684" width="2" height="7" fill="#58e894"/><rect x="61" y="684" width="2" height="7" fill="#58e894"/><rect x="64" y="684" width="2" height="7" fill="#58e894"/><rect x="67" y="684" width="2" height="7" fill="#58e894"/><rect x="70" y="684" width="2" height="7" fill="#58e894"/><rect x="73" y="684" width="2" height="7" fill="#58e894"/><rect x="76" y="684" width="2" height="7" fill="#58e894"/><rect x="79" y="684" width="2" height="7" fill="#58e894"/><rect x="82" y="684" width="2" height="7" fill="#58e894"/><rect x="85" y="684" width="2" height="7" fill="#58e894"/><rect x="88" y="684" width="2" height="7" fill="#58e894"/><rect x="91" y="684" width="2" height="7" fill="#58e894"/><rect x="94" y="684" width="2" height="7" fill="#58e894"/><rect x="97" y="684" width="2" height="7" fill="#58e894"/><rect x="100" y="684" width="2" height="7" fill="#58e894"/><rect x="103" y="684" width="2" height="7" fill="#58e894"/><rect x="106" y="684" width="2" height="7" fill="#58e894"/><rect x="109" y="684" width="2" height="7" fill="#58e894"/><rect x="112" y="684" width="2" height="7" fill="#58e894"/><rect x="115" y="684" width="2" height="7" fill="#58e894"/><rect x="118" y="684" width="2" height="7" fill="#58e894"/><rect x="121" y="684" width="2" height="7" fill="#58e894"/><rect x="124" y="684" width="2" height="7" fill="#58e894"/><rect x="127" y="684" width="2" height="7" fill="#58e894"/><rect x="130" y="684" width="2" height="7" fill="#58e894"/><rect x="133" y="684" width="2" height="7" fill="#58e894"/><rect x="136" y="684" width="2" height="7" fill="#58e894"/><rect x="139" y="684" width="2" height="7" fill="#58e894"/><rect x="142" y="684" width="2" height="7" fill="#58e894"/><rect x="145" y="684" width="2" height="7" fill="#58e894"/><rect x="148" y="684" width="2" height="7" fill="#58e894"/><rect x="151" y="684" width="2" height="7" fill="#58e894"/><rect x="154" y="684" width="2" height="7" fill="#58e894"/><rect x="157" y="684" width="2" height="7" fill="#58e894"/><rect x="160" y="684" width="2" height="7" fill="#58e894"/><rect x="163" y="684" width="2" height="7" fill="#58e894"/><rect x="166" y="684" width="2" height="7" fill="#58e894"/><rect x="169" y="684" width="2" height="7" fill="#58e894"/><rect x="172" y="684" width="2" height="7" fill="#58e894"/><rect x="175" y="684" width="2" height="7" fill="#58e894"/><rect x="178" y="684" width="2" height="7" fill="#58e894"/><rect x="181" y="684" width="2" height="7" fill="#58e894"/><rect x="184" y="684" width="2" height="7" fill="#58e894"/><rect x="187" y="684" width="2" height="7" fill="#58e894"/><rect x="190" y="684" width="2" height="7" fill="#58e894"/><rect x="193" y="684" width="2" height="7" fill="#58e894"/><rect x="196" y="684" width="2" height="7" fill="#58e894"/><rect x="199" y="684" width="2" height="7" fill="#58e894"/><rect x="202" y="684" width="2" height="7" fill="#58e894"/><rect x="205" y="684" width="2" height="7" fill="#58e894"/><rect x="208" y="684" width="2" height="7" fill="#58e894"/><rect x="211" y="684" width="2" height="7" fill="#58e894"/><rect x="214" y="684" width="2" height="7" fill="#58e894"/><rect x="217" y="684" width="2" height="7" fill="#58e894"/><rect x="220" y="684" width="2" height="7" fill="#58e894"/><rect x="223" y="684" width="2" height="7" fill="#58e894"/><rect x="226" y="684" width="2" height="7" fill="#58e894"/><rect x="229" y="684" width="2" height="7" fill="#58e894"/><rect x="232" y="684" width="2" height="7" fill="#58e894"/><rect x="235" y="684" width="2" height="7" fill="#58e894"/><rect x="238" y="684" width="2" height="7" fill="#a8d468"/><rect x="241" y="684" width="2" height="7" fill="#a8d468"/><rect x="244" y="684" width="2" height="7" fill="#a8d468"/><rect x="247" y="684" width="2" height="7" fill="#a8d468"/><rect x="250" y="684" width="2" height="7" fill="#a8d468"/><rect x="253" y="684" width="2" height="7" fill="#e4e428"/><rect x="256" y="684" width="2" height="7" fill="#e4e428"/><rect x="259" y="684" width="2" height="7" fill="#e4e428"/><rect x="262" y="684" width="2" height="7" fill="#e4e428"/><rect x="265" y="684" width="2" height="7" fill="#e4e428"/><rect x="268" y="684" width="2" height="7" fill="#e4e428"/><rect x="271" y="684" width="2" height="7" fill="#e4e428"/><rect x="274" y="684" width="2" height="7" fill="#2a282a"/><rect x="277" y="684" width="2" height="7" fill="#2a282a"/><rect x="280" y="684" width="2" height="7" fill="#2a282a"/><rect x="283" y="684" width="2" height="7" fill="#2a282a"/><rect x="286" y="684" width="2" height="7" fill="#2a282a"/><rect x="289" y="684" width="2" height="7" fill="#2a282a"/><rect x="292" y="684" width="2" height="7" fill="#2a282a"/><rect x="295" y="684" width="2" height="7" fill="#2a282a"/><rect x="298" y="684" width="2" height="7" fill="#2a282a"/><rect x="301" y="684" width="2" height="7" fill="#2a282a"/><rect x="304" y="684" width="2" height="7" fill="#2a282a"/><rect x="307" y="684" width="2" height="7" fill="#2a282a"/><rect x="310" y="684" width="2" height="7" fill="#2a282a"/><rect x="313" y="684" width="2" height="7" fill="#2a282a"/><rect x="316" y="684" width="2" height="7" fill="#2a282a"/><rect x="319" y="684" width="2" height="7" fill="#2a282a"/><rect x="322" y="684" width="2" height="7" fill="#2a282a"/><rect x="325" y="684" width="2" height="7" fill="#2a282a"/><rect x="328" y="684" width="2" height="7" fill="#2a282a"/><rect x="331" y="684" width="2" height="7" fill="#2a282a"/><rect x="334" y="684" width="2" height="7" fill="#2a282a"/><rect x="337" y="684" width="2" height="7" fill="#2a282a"/><rect x="340" y="684" width="2" height="7" fill="#2a282a"/><rect x="343" y="684" width="2" height="7" fill="#2a282a"/><rect x="346" y="684" width="2" height="7" fill="#2a282a"/><rect x="349" y="684" width="2" height="7" fill="#2a282a"/><rect x="352" y="684" width="2" height="7" fill="#2a282a"/><rect x="355" y="684" width="2" height="7" fill="#2a282a"/><rect x="358" y="684" width="2" height="7" fill="#2a282a"/><rect x="361" y="684" width="2" height="7" fill="#2a282a"/><rect x="364" y="684" width="2" height="7" fill="#2a282a"/><rect x="367" y="684" width="2" height="7" fill="#2a282a"/><rect x="370" y="684" width="2" height="7" fill="#2a282a"/><rect x="373" y="684" width="2" height="7" fill="#2a282a"/><rect x="376" y="684" width="2" height="7" fill="#2a282a"/><rect x="379" y="684" width="2" height="7" fill="#2a282a"/><rect x="382" y="684" width="2" height="7" fill="#2a282a"/><rect x="385" y="684" width="2" height="7" fill="#2a282a"/><rect x="388" y="684" width="2" height="7" fill="#2a282a"/><rect x="391" y="684" width="2" height="7" fill="#2a282a"/><rect x="394" y="684" width="2" height="7" fill="#2a282a"/><rect x="397" y="684" width="2" height="7" fill="#2a282a"/><rect x="400" y="684" width="2" height="7" fill="#2a282a"/><rect x="403" y="684" width="2" height="7" fill="#2a282a"/><rect x="406" y="684" width="2" height="7" fill="#2a282a"/><rect x="409" y="684" width="2" height="7" fill="#2a282a"/><rect x="412" y="684" width="2" height="7" fill="#2a282a"/><rect x="415" y="684" width="2" height="7" fill="#2a282a"/><rect x="418" y="684" width="2" height="7" fill="#2a282a"/><rect x="421" y="684" width="2" height="7" fill="#2a282a"/><rect x="424" y="684" width="2" height="7" fill="#2a282a"/><rect x="427" y="684" width="2" height="7" fill="#2a282a"/><rect x="430" y="684" width="2" height="7" fill="#2a282a"/><rect x="37" y="721" width="2" height="7" fill="#58e894"/><rect x="40" y="721" width="2" height="7" fill="#58e894"/><rect x="43" y="721" width="2" height="7" fill="#58e894"/><rect x="46" y="721" width="2" height="7" fill="#58e894"/><rect x="49" y="721" width="2" height="7" fill="#58e894"/><rect x="52" y="721" width="2" height="7" fill="#58e894"/><rect x="55" y="721" width="2" height="7" fill="#58e894"/><rect x="58" y="721" width="2" height="7" fill="#58e894"/><rect x="61" y="721" width="2" height="7" fill="#58e894"/><rect x="64" y="721" width="2" height="7" fill="#58e894"/><rect x="67" y="721" width="2" height="7" fill="#58e894"/><rect x="70" y="721" width="2" height="7" fill="#58e894"/><rect x="73" y="721" width="2" height="7" fill="#58e894"/><rect x="76" y="721" width="2" height="7" fill="#58e894"/><rect x="79" y="721" width="2" height="7" fill="#58e894"/><rect x="82" y="721" width="2" height="7" fill="#58e894"/><rect x="85" y="721" width="2" height="7" fill="#58e894"/><rect x="88" y="721" width="2" height="7" fill="#58e894"/><rect x="91" y="721" width="2" height="7" fill="#58e894"/><rect x="94" y="721" width="2" height="7" fill="#58e894"/><rect x="97" y="721" width="2" height="7" fill="#58e894"/><rect x="100" y="721" width="2" height="7" fill="#58e894"/><rect x="103" y="721" width="2" height="7" fill="#58e894"/><rect x="106" y="721" width="2" height="7" fill="#58e894"/><rect x="109" y="721" width="2" height="7" fill="#58e894"/><rect x="112" y="721" width="2" height="7" fill="#58e894"/><rect x="115" y="721" width="2" height="7" fill="#58e894"/><rect x="118" y="721" width="2" height="7" fill="#58e894"/><rect x="121" y="721" width="2" height="7" fill="#58e894"/><rect x="124" y="721" width="2" height="7" fill="#58e894"/><rect x="127" y="721" width="2" height="7" fill="#58e894"/><rect x="130" y="721" width="2" height="7" fill="#58e894"/><rect x="133" y="721" width="2" height="7" fill="#58e894"/><rect x="136" y="721" width="2" height="7" fill="#58e894"/><rect x="139" y="721" width="2" height="7" fill="#58e894"/><rect x="142" y="721" width="2" height="7" fill="#58e894"/><rect x="145" y="721" width="2" height="7" fill="#58e894"/><rect x="148" y="721" width="2" height="7" fill="#58e894"/><rect x="151" y="721" width="2" height="7" fill="#58e894"/><rect x="154" y="721" width="2" height="7" fill="#58e894"/><rect x="157" y="721" width="2" height="7" fill="#58e894"/><rect x="160" y="721" width="2" height="7" fill="#58e894"/><rect x="163" y="721" width="2" height="7" fill="#58e894"/><rect x="166" y="721" width="2" height="7" fill="#58e894"/><rect x="169" y="721" width="2" height="7" fill="#58e894"/><rect x="172" y="721" width="2" height="7" fill="#58e894"/><rect x="175" y="721" width="2" height="7" fill="#58e894"/><rect x="178" y="721" width="2" height="7" fill="#58e894"/><rect x="181" y="721" width="2" height="7" fill="#58e894"/><rect x="184" y="721" width="2" height="7" fill="#58e894"/><rect x="187" y="721" width="2" height="7" fill="#58e894"/><rect x="190" y="721" width="2" height="7" fill="#58e894"/><rect x="193" y="721" width="2" height="7" fill="#58e894"/><rect x="196" y="721" width="2" height="7" fill="#58e894"/><rect x="199" y="721" width="2" height="7" fill="#58e894"/><rect x="202" y="721" width="2" height="7" fill="#58e894"/><rect x="205" y="721" width="2" height="7" fill="#58e894"/><rect x="208" y="721" width="2" height="7" fill="#58e894"/><rect x="211" y="721" width="2" height="7" fill="#58e894"/><rect x="214" y="721" width="2" height="7" fill="#58e894"/><rect x="217" y="721" width="2" height="7" fill="#58e894"/><rect x="220" y="721" width="2" height="7" fill="#58e894"/><rect x="223" y="721" width="2" height="7" fill="#58e894"/><rect x="226" y="721" width="2" height="7" fill="#58e894"/><rect x="229" y="721" width="2" height="7" fill="#58e894"/><rect x="232" y="721" width="2" height="7" fill="#58e894"/><rect x="235" y="721" width="2" height="7" fill="#58e894"/><rect x="238" y="721" width="2" height="7" fill="#a8d468"/><rect x="241" y="721" width="2" height="7" fill="#a8d468"/><rect x="244" y="721" width="2" height="7" fill="#a8d468"/><rect x="247" y="721" width="2" height="7" fill="#a8d468"/><rect x="250" y="721" width="2" height="7" fill="#a8d468"/><rect x="253" y="721" width="2" height="7" fill="#e4e428"/><rect x="256" y="721" width="2" height="7" fill="#e4e428"/><rect x="259" y="721" width="2" height="7" fill="#e4e428"/><rect x="262" y="721" width="2" height="7" fill="#e4e428"/><rect x="265" y="721" width="2" height="7" fill="#e4e428"/><rect x="268" y="721" width="2" height="7" fill="#e4e428"/><rect x="271" y="721" width="2" height="7" fill="#e4e428"/><rect x="274" y="721" width="2" height="7" fill="#2a282a"/><rect x="277" y="721" width="2" height="7" fill="#2a282a"/><rect x="280" y="721" width="2" height="7" fill="#2a282a"/><rect x="283" y="721" width="2" height="7" fill="#2a282a"/><rect x="286" y="721" width="2" height="7" fill="#2a282a"/><rect x="289" y="721" width="2" height="7" fill="#2a282a"/><rect x="292" y="721" width="2" height="7" fill="#2a282a"/><rect x="295" y="721" width="2" height="7" fill="#2a282a"/><rect x="298" y="721" width="2" height="7" fill="#2a282a"/><rect x="301" y="721" width="2" height="7" fill="#2a282a"/><rect x="304" y="721" width="2" height="7" fill="#2a282a"/><rect x="307" y="721" width="2" height="7" fill="#2a282a"/><rect x="310" y="721" width="2" height="7" fill="#2a282a"/><rect x="313" y="721" width="2" height="7" fill="#2a282a"/><rect x="316" y="721" width="2" height="7" fill="#2a282a"/><rect x="319" y="721" width="2" height="7" fill="#2a282a"/><rect x="322" y="721" width="2" height="7" fill="#2a282a"/><rect x="325" y="721" width="2" height="7" fill="#2a282a"/><rect x="328" y="721" width="2" height="7" fill="#2a282a"/><rect x="331" y="721" width="2" height="7" fill="#2a282a"/><rect x="334" y="721" width="2" height="7" fill="#2a282a"/><rect x="337" y="721" width="2" height="7" fill="#2a282a"/><rect x="340" y="721" width="2" height="7" fill="#2a282a"/><rect x="343" y="721" width="2" height="7" fill="#2a282a"/><rect x="346" y="721" width="2" height="7" fill="#2a282a"/><rect x="349" y="721" width="2" height="7" fill="#2a282a"/><rect x="352" y="721" width="2" height="7" fill="#2a282a"/><rect x="355" y="721" width="2" height="7" fill="#2a282a"/><rect x="358" y="721" width="2" height="7" fill="#2a282a"/><rect x="361" y="721" width="2" height="7" fill="#2a282a"/><rect x="364" y="721" width="2" height="7" fill="#2a282a"/><rect x="367" y="721" width="2" height="7" fill="#2a282a"/><rect x="370" y="721" width="2" height="7" fill="#2a282a"/><rect x="373" y="721" width="2" height="7" fill="#2a282a"/><rect x="376" y="721" width="2" height="7" fill="#2a282a"/><rect x="379" y="721" width="2" height="7" fill="#2a282a"/><rect x="382" y="721" width="2" height="7" fill="#2a282a"/><rect x="385" y="721" width="2" height="7" fill="#2a282a"/><rect x="388" y="721" width="2" height="7" fill="#2a282a"/><rect x="391" y="721" width="2" height="7" fill="#2a282a"/><rect x="394" y="721" width="2" height="7" fill="#2a282a"/><rect x="397" y="721" width="2" height="7" fill="#2a282a"/><rect x="400" y="721" width="2" height="7" fill="#2a282a"/><rect x="403" y="721" width="2" height="7" fill="#2a282a"/><rect x="406" y="721" width="2" height="7" fill="#2a282a"/><rect x="409" y="721" width="2" height="7" fill="#2a282a"/><rect x="412" y="721" width="2" height="7" fill="#2a282a"/><rect x="415" y="721" width="2" height="7" fill="#2a282a"/><rect x="418" y="721" width="2" height="7" fill="#2a282a"/><rect x="421" y="721" width="2" height="7" fill="#2a282a"/><rect x="424" y="721" width="2" height="7" fill="#2a282a"/><rect x="427" y="721" width="2" height="7" fill="#2a282a"/><rect x="430" y="721" width="2" height="7" fill="#2a282a"/></svg>
<div style="left:442px;top:656px;width:22px;height:34px;background:#2a282a;border-radius:3px"></div>
<div style="left:468px;top:656px;width:22px;height:34px;background:#2a282a;border-radius:3px"></div>
<div style="left:442px;top:693px;width:22px;height:34px;background:#2a282a;border-radius:3px"></div>
<div style="left:468px;top:693px;width:22px;height:34px;background:#2a282a;border-radius:3px"></div>
<svg style="left:0;top:0" width="520" height="795"><path d="M446 673 q3.5 -9 7 0 t7 0" fill="none" stroke="#b0b0b0" stroke-width="1.5"/><path d="M446 710 q3.5 -9 7 0 t7 0" fill="none" stroke="#b0b0b0" stroke-width="1.5"/><g fill="#b0b0b0"><rect x="480" y="666" width="2" height="2"/><rect x="477" y="669" width="2" height="2"/><rect x="480" y="669" width="2" height="2"/><rect x="474" y="672" width="2" height="2"/><rect x="477" y="672" width="2" height="2"/><rect x="480" y="672" width="2" height="2"/><rect x="483" y="672" width="2" height="2"/><rect x="474" y="675" width="2" height="2"/><rect x="477" y="675" width="2" height="2"/><rect x="480" y="675" width="2" height="2"/><rect x="483" y="675" width="2" height="2"/><rect x="483" y="669" width="2" height="2"/></g><g fill="#b0b0b0"><rect x="480" y="703" width="2" height="2"/><rect x="477" y="706" width="2" height="2"/><rect x="480" y="706" width="2" height="2"/><rect x="474" y="709" width="2" height="2"/><rect x="477" y="709" width="2" height="2"/><rect x="480" y="709" width="2" height="2"/><rect x="483" y="709" width="2" height="2"/><rect x="474" y="712" width="2" height="2"/><rect x="477" y="712" width="2" height="2"/><rect x="480" y="712" width="2" height="2"/><rect x="483" y="712" width="2" height="2"/><rect x="483" y="706" width="2" height="2"/></g></svg>
<svg style="left:0;top:0" width="520" height="795"><rect x="37" y="732" width="452" height="50" fill="#3c3a3c"/><line x1="37" y1="732.5" x2="489" y2="732.5" stroke="#6a6868"/><line x1="37.5" y1="732" x2="37.5" y2="782" stroke="#7a7878"/><line x1="58.4" y1="733" x2="58.4" y2="782" stroke="#6a6868" stroke-width="1"/><line x1="80.5" y1="733" x2="80.5" y2="782" stroke="#6a6868" stroke-width="1"/><line x1="102.6" y1="733" x2="102.6" y2="782" stroke="#6a6868" stroke-width="1"/><line x1="124.7" y1="733" x2="124.7" y2="782" stroke="#6a6868" stroke-width="1"/><line x1="146.8" y1="733" x2="146.8" y2="782" stroke="#6a6868" stroke-width="1"/><line x1="168.9" y1="733" x2="168.9" y2="782" stroke="#6a6868" stroke-width="1"/><line x1="191.0" y1="733" x2="191.0" y2="782" stroke="#6a6868" stroke-width="1"/><line x1="213.1" y1="733" x2="213.1" y2="782" stroke="#6a6868" stroke-width="1"/><line x1="235.2" y1="733" x2="235.2" y2="782" stroke="#6a6868" stroke-width="1"/><line x1="257.3" y1="733" x2="257.3" y2="782" stroke="#6a6868" stroke-width="1"/><line x1="279.4" y1="733" x2="279.4" y2="782" stroke="#6a6868" stroke-width="1"/><line x1="301.5" y1="733" x2="301.5" y2="782" stroke="#6a6868" stroke-width="1"/><line x1="323.6" y1="733" x2="323.6" y2="782" stroke="#6a6868" stroke-width="1"/><line x1="345.7" y1="733" x2="345.7" y2="782" stroke="#6a6868" stroke-width="1"/><line x1="367.8" y1="733" x2="367.8" y2="782" stroke="#6a6868" stroke-width="1"/><line x1="389.9" y1="733" x2="389.9" y2="782" stroke="#6a6868" stroke-width="1"/><line x1="412.0" y1="733" x2="412.0" y2="782" stroke="#6a6868" stroke-width="1"/><line x1="434.1" y1="733" x2="434.1" y2="782" stroke="#6a6868" stroke-width="1"/><line x1="456.2" y1="733" x2="456.2" y2="782" stroke="#6a6868" stroke-width="1"/><line x1="478.3" y1="733" x2="478.3" y2="782" stroke="#6a6868" stroke-width="1"/><line x1="37" y1="757.5" x2="489" y2="757.5" stroke="#6a6868" stroke-width="1"/><polyline points="37.0,758.0 38.5,758.4 40.0,758.2 41.5,758.5 43.0,758.5 44.5,757.9 46.0,757.8 47.5,758.8 49.0,758.1 50.5,758.1 52.0,759.1 53.5,758.4 55.0,758.9 56.6,758.6 58.1,758.9 59.7,758.4 61.3,759.1 62.8,759.5 64.4,759.2 66.0,759.5 67.5,759.6 69.1,759.0 70.7,759.9 72.2,759.8 73.8,759.6 75.3,758.8 76.9,759.3 78.5,758.4 80.0,758.3 81.5,758.2 83.0,757.8 84.5,757.8 86.0,756.9 87.5,757.1 89.0,756.4 90.5,757.1 92.0,757.0 93.5,756.1 95.0,756.2 96.5,756.3 98.0,757.3 99.5,756.7 101.0,756.9 102.5,756.6 104.0,756.9 105.5,756.8 107.0,756.7 108.5,757.1 110.0,757.1 111.5,757.6 113.1,757.4 114.6,757.7 116.2,757.7 117.7,758.0 119.3,757.6 120.8,757.1 122.4,758.0 123.9,758.2 125.5,758.2 127.0,757.9 128.6,757.8 130.2,757.0 131.9,757.5 133.5,757.0 135.1,756.4 136.8,755.9 138.4,756.6 140.0,756.6 141.5,755.3 143.0,756.0 144.6,755.3 146.1,754.8 147.6,754.8 149.2,755.4 150.8,755.5 152.4,754.6 154.0,755.3 155.6,754.6 157.2,755.5 158.8,755.0 160.4,755.7 162.0,755.9 163.6,755.4 165.2,756.0 166.8,755.2 168.4,755.0 170.0,755.6 171.6,755.0 173.2,755.2 174.8,755.5 176.4,755.7 178.0,755.2 179.6,755.1 181.2,756.1 182.8,755.5 184.4,756.3 186.0,756.2 187.6,755.6 189.2,755.7 190.8,755.8 192.4,755.9 194.0,755.7 195.6,755.5 197.2,755.5 198.8,755.8 200.4,755.2 202.0,755.0 203.6,755.2 205.2,754.5 206.8,754.5 208.4,755.2 210.0,754.5 211.6,754.4 213.2,753.7 214.8,754.1 216.3,754.2 217.9,753.4 219.5,754.0 221.1,753.9 222.7,753.1 224.2,753.7 225.8,753.4 227.4,753.5 229.0,753.0 230.5,753.5 232.0,753.6 233.5,752.8 235.0,752.9 236.5,753.7 238.0,754.1 239.5,753.3 241.0,753.6 242.5,753.8 244.0,753.6 245.5,753.7 247.0,753.7 248.5,753.8 250.0,754.1 251.5,753.7 253.1,753.7 254.6,754.1 256.1,753.1 257.6,753.7 259.2,753.9 260.7,753.3 262.2,753.1 263.8,753.7 265.3,753.0 266.8,752.8 268.4,753.1 269.9,753.3 271.4,752.5 272.9,752.7 274.5,752.7 276.0,753.2 277.5,752.9 279.0,753.6 280.6,753.0 282.1,753.4 283.6,753.9 285.1,754.4 286.6,754.1 288.1,754.0 289.7,754.0 291.2,754.7 292.7,754.5 294.2,755.4 295.7,755.7 297.2,755.1 298.8,755.4 300.3,756.2 301.8,756.2 303.4,756.3 304.9,755.7 306.5,755.4 308.1,755.5 309.6,756.1 311.2,755.4 312.8,755.4 314.3,755.5 315.9,755.4 317.5,755.3 319.0,755.9 320.6,754.9 322.2,754.7 323.7,755.8 325.3,755.6 326.9,755.7 328.4,755.0 330.0,755.5 331.6,755.5 333.2,754.6 334.7,755.2 336.3,755.3 337.9,755.1 339.5,754.9 341.1,754.6 342.6,754.6 344.2,754.4 345.8,754.2 347.4,754.8 349.0,754.4 350.5,755.0 352.1,754.1 353.7,755.1 355.2,754.9 356.8,755.3 358.3,755.3 359.9,755.4 361.4,755.1 363.0,754.5 364.5,755.5 366.1,754.9 367.6,755.1 369.2,755.6 370.7,755.5 372.3,755.5 373.8,756.2 375.4,755.9 376.9,755.6 378.5,755.6 380.0,756.4 381.5,756.0 383.0,756.5 384.5,756.0 386.0,755.9 387.5,756.3 389.0,756.7 390.5,756.0 392.0,756.8 393.5,757.0 395.0,757.0 396.5,757.0 398.0,756.1 399.5,756.9 401.0,757.3 402.5,756.3 404.0,756.7 405.5,756.7 407.1,757.0 408.6,756.9 410.2,757.0 411.7,757.3 413.3,756.4 414.8,756.5 416.4,756.6 417.9,756.5 419.5,756.5 421.1,757.6 422.6,757.4 424.2,756.5 425.7,757.0 427.3,756.8 428.8,756.8 430.4,756.8 431.9,757.2 433.5,757.1 435.0,756.8 436.6,756.6 438.2,756.8 439.7,756.5 441.3,757.0 442.9,757.1 444.4,756.7 446.0,756.3 447.6,756.4 449.2,756.6 450.7,756.8 452.3,757.0 453.9,756.5 455.4,757.0 457.0,756.7 458.6,756.8 460.2,757.0 461.9,757.4 463.5,757.9 465.1,757.8 466.8,758.4 468.4,758.4 470.0,758.4 471.5,758.7 473.1,758.9 474.6,758.2 476.2,758.6 477.7,758.6 479.2,759.2 480.8,759.2 482.3,758.5 483.9,759.2 485.4,759.0 487.0,758.4 488.5,758.7" fill="none" stroke="#f4f4f4" stroke-width="1.8" stroke-linejoin="round"/><rect x="477.5" y="767.5" width="9" height="6" rx="3" fill="#1a1a1a" stroke="#c8c8c8" stroke-width="1"/><rect x="499" y="714" width="8" height="71" rx="4" fill="#2a282a"/></svg>
</body></html>
